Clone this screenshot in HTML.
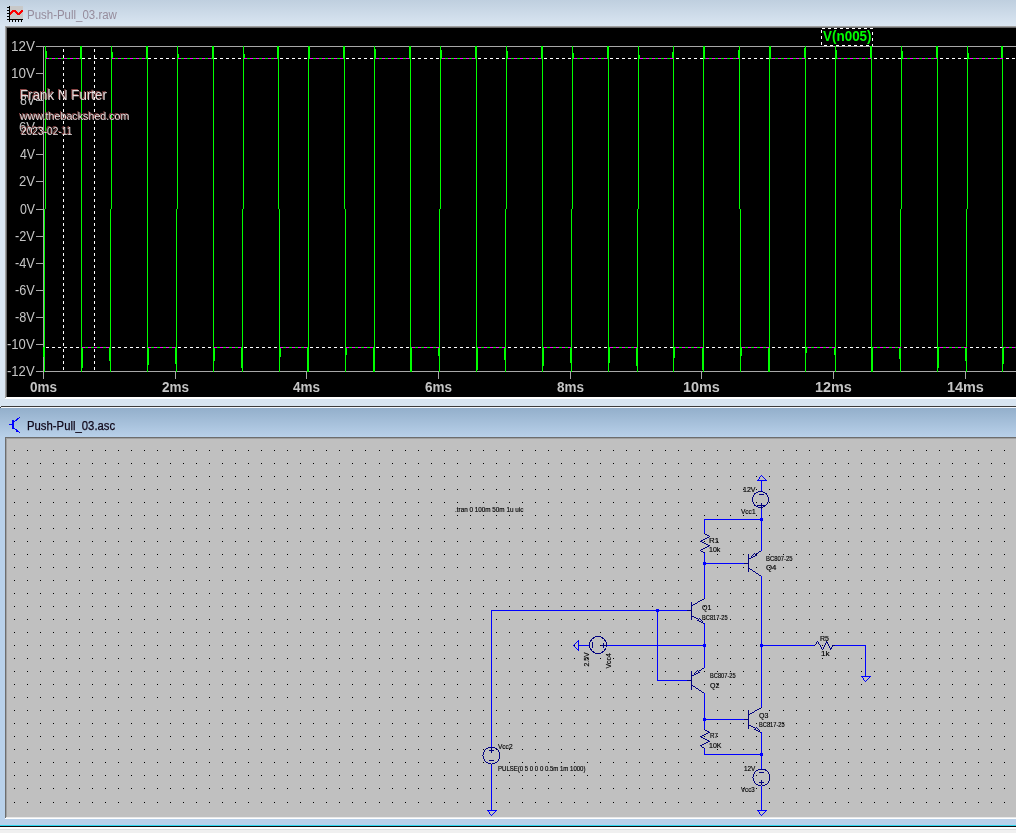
<!DOCTYPE html>
<html><head><meta charset="utf-8"><style>
html,body{margin:0;padding:0;background:#d9e5f1;overflow:hidden;width:1016px;height:833px}
svg{position:absolute;left:0;top:0;display:block}
text{font-family:"Liberation Sans",sans-serif}
</style></head><body>
<svg width="1016" height="833" viewBox="0 0 1016 833" shape-rendering="crispEdges">
<defs>
<linearGradient id="tb1" x1="0" y1="0" x2="0" y2="1"><stop offset="0" stop-color="#bfcfdf"/><stop offset="1" stop-color="#dae6f2"/></linearGradient>
<linearGradient id="tb2" x1="0" y1="0" x2="0" y2="1"><stop offset="0" stop-color="#93afcb"/><stop offset="1" stop-color="#b8d0e9"/></linearGradient>
</defs>
<rect x="0" y="0" width="1016" height="833" fill="#d9e5f1"/>
<rect x="0" y="0" width="1016" height="26" fill="url(#tb1)"/>
<rect x="0" y="26" width="5" height="371" fill="#dae6f2"/>
<rect x="5" y="26" width="1011" height="1" fill="#a0a0a0"/>
<rect x="6" y="27" width="1010" height="1" fill="#696969"/>
<rect x="5" y="26" width="1" height="373" fill="#a0a0a0"/>
<rect x="6" y="27" width="1" height="371" fill="#696969"/>
<rect x="7" y="28" width="1009" height="369" fill="#000000"/>
<rect x="6" y="397" width="1010" height="1" fill="#ffffff"/>
<rect x="5" y="398" width="1011" height="1" fill="#ffffff"/>
<rect x="0" y="399" width="1016" height="7" fill="#d8e5f1"/>
<rect x="10" y="6" width="13" height="13" fill="#c8c8c8"/>
<rect x="9" y="6" width="1" height="16" fill="#000000"/>
<rect x="7" y="19" width="16" height="1" fill="#000000"/>
<rect x="7" y="7" width="2" height="1" fill="#000000"/>
<rect x="7" y="10" width="2" height="1" fill="#000000"/>
<rect x="7" y="13" width="2" height="1" fill="#000000"/>
<rect x="7" y="16" width="2" height="1" fill="#000000"/>
<rect x="12" y="20" width="1" height="2" fill="#000000"/>
<rect x="15" y="20" width="1" height="2" fill="#000000"/>
<rect x="18" y="20" width="1" height="2" fill="#000000"/>
<rect x="21" y="20" width="1" height="2" fill="#000000"/>
<path d="M10 14.5 L13 11 L15.5 11 L17.5 13.5 L19.5 13.5 L22.5 10" fill="none" stroke="#ff0000" stroke-width="2" shape-rendering="crispEdges"/>
<text x="27" y="19" font-size="12.5" font-weight="normal" fill="#968c9c" textLength="89.89" lengthAdjust="spacingAndGlyphs">Push-Pull_03.raw</text>
<rect x="43" y="46" width="973" height="1" fill="#a8a8a8"/>
<rect x="43" y="371" width="973" height="1" fill="#a8a8a8"/>
<rect x="43" y="46" width="1" height="333" fill="#a8a8a8"/>
<rect x="36" y="46" width="8" height="1" fill="#a8a8a8"/>
<text x="11" y="51" font-size="14" font-weight="normal" fill="#c4c4c4" textLength="23.88" lengthAdjust="spacingAndGlyphs">12V</text>
<rect x="36" y="73" width="8" height="1" fill="#a8a8a8"/>
<text x="11" y="78" font-size="14" font-weight="normal" fill="#c4c4c4" textLength="23.88" lengthAdjust="spacingAndGlyphs">10V</text>
<rect x="36" y="100" width="8" height="1" fill="#a8a8a8"/>
<text x="20" y="105" font-size="14" font-weight="normal" fill="#c4c4c4" textLength="15.11" lengthAdjust="spacingAndGlyphs">8V</text>
<rect x="36" y="127" width="8" height="1" fill="#a8a8a8"/>
<text x="19" y="132" font-size="14" font-weight="normal" fill="#c4c4c4" textLength="16.05" lengthAdjust="spacingAndGlyphs">6V</text>
<rect x="36" y="154" width="8" height="1" fill="#a8a8a8"/>
<text x="20" y="159" font-size="14" font-weight="normal" fill="#c4c4c4" textLength="15.11" lengthAdjust="spacingAndGlyphs">4V</text>
<rect x="36" y="181" width="8" height="1" fill="#a8a8a8"/>
<text x="19" y="186" font-size="14" font-weight="normal" fill="#c4c4c4" textLength="16.05" lengthAdjust="spacingAndGlyphs">2V</text>
<rect x="36" y="209" width="8" height="1" fill="#a8a8a8"/>
<text x="20" y="214" font-size="14" font-weight="normal" fill="#c4c4c4" textLength="15.11" lengthAdjust="spacingAndGlyphs">0V</text>
<rect x="36" y="236" width="8" height="1" fill="#a8a8a8"/>
<text x="15" y="241" font-size="14" font-weight="normal" fill="#c4c4c4" textLength="19.82" lengthAdjust="spacingAndGlyphs">-2V</text>
<rect x="36" y="263" width="8" height="1" fill="#a8a8a8"/>
<text x="15" y="268" font-size="14" font-weight="normal" fill="#c4c4c4" textLength="19.82" lengthAdjust="spacingAndGlyphs">-4V</text>
<rect x="36" y="290" width="8" height="1" fill="#a8a8a8"/>
<text x="15" y="295" font-size="14" font-weight="normal" fill="#c4c4c4" textLength="19.82" lengthAdjust="spacingAndGlyphs">-6V</text>
<rect x="36" y="317" width="8" height="1" fill="#a8a8a8"/>
<text x="15" y="322" font-size="14" font-weight="normal" fill="#c4c4c4" textLength="19.82" lengthAdjust="spacingAndGlyphs">-8V</text>
<rect x="36" y="344" width="8" height="1" fill="#a8a8a8"/>
<text x="7" y="349" font-size="14" font-weight="normal" fill="#c4c4c4" textLength="27.61" lengthAdjust="spacingAndGlyphs">-10V</text>
<rect x="36" y="371" width="8" height="1" fill="#a8a8a8"/>
<text x="7" y="376" font-size="14" font-weight="normal" fill="#c4c4c4" textLength="27.61" lengthAdjust="spacingAndGlyphs">-12V</text>
<rect x="43" y="371" width="1" height="8" fill="#a8a8a8"/>
<text x="30" y="392" font-size="14" font-weight="bold" fill="#c4c4c4" textLength="27.03" lengthAdjust="spacingAndGlyphs">0ms</text>
<rect x="175" y="371" width="1" height="8" fill="#a8a8a8"/>
<text x="162" y="392" font-size="14" font-weight="bold" fill="#c4c4c4" textLength="27.03" lengthAdjust="spacingAndGlyphs">2ms</text>
<rect x="306" y="371" width="1" height="8" fill="#a8a8a8"/>
<text x="293" y="392" font-size="14" font-weight="bold" fill="#c4c4c4" textLength="27.03" lengthAdjust="spacingAndGlyphs">4ms</text>
<rect x="438" y="371" width="1" height="8" fill="#a8a8a8"/>
<text x="425" y="392" font-size="14" font-weight="bold" fill="#c4c4c4" textLength="27.03" lengthAdjust="spacingAndGlyphs">6ms</text>
<rect x="570" y="371" width="1" height="8" fill="#a8a8a8"/>
<text x="557" y="392" font-size="14" font-weight="bold" fill="#c4c4c4" textLength="27.03" lengthAdjust="spacingAndGlyphs">8ms</text>
<rect x="701" y="371" width="1" height="8" fill="#a8a8a8"/>
<text x="683" y="392" font-size="14" font-weight="bold" fill="#c4c4c4" textLength="36.87" lengthAdjust="spacingAndGlyphs">10ms</text>
<rect x="833" y="371" width="1" height="8" fill="#a8a8a8"/>
<text x="815" y="392" font-size="14" font-weight="bold" fill="#c4c4c4" textLength="36.87" lengthAdjust="spacingAndGlyphs">12ms</text>
<rect x="965" y="371" width="1" height="8" fill="#a8a8a8"/>
<text x="947" y="392" font-size="14" font-weight="bold" fill="#c4c4c4" textLength="36.87" lengthAdjust="spacingAndGlyphs">14ms</text>
<rect x="45" y="46" width="1" height="163" fill="#00ff00"/>
<rect x="44" y="209" width="1" height="163" fill="#00ff00"/>
<rect x="46" y="51" width="1" height="8" fill="#00ff00"/>
<rect x="43" y="347" width="1" height="10" fill="#00ff00"/>
<rect x="46" y="58" width="35" height="1" fill="#00ff00"/>
<rect x="81" y="46" width="1" height="163" fill="#00ff00"/>
<rect x="81" y="209" width="1" height="163" fill="#00ff00"/>
<rect x="80" y="46" width="1" height="13" fill="#00ff00"/>
<rect x="82" y="347" width="1" height="21" fill="#00ff00"/>
<rect x="82" y="347" width="28" height="1" fill="#00ff00"/>
<rect x="111" y="46" width="1" height="163" fill="#00ff00"/>
<rect x="110" y="209" width="1" height="163" fill="#00ff00"/>
<rect x="112" y="52" width="1" height="7" fill="#00ff00"/>
<rect x="109" y="347" width="1" height="14" fill="#00ff00"/>
<rect x="112" y="58" width="35" height="1" fill="#00ff00"/>
<rect x="147" y="46" width="1" height="163" fill="#00ff00"/>
<rect x="147" y="209" width="1" height="163" fill="#00ff00"/>
<rect x="146" y="46" width="1" height="13" fill="#00ff00"/>
<rect x="148" y="347" width="1" height="18" fill="#00ff00"/>
<rect x="148" y="347" width="28" height="1" fill="#00ff00"/>
<rect x="177" y="46" width="1" height="163" fill="#00ff00"/>
<rect x="176" y="209" width="1" height="163" fill="#00ff00"/>
<rect x="178" y="54" width="1" height="5" fill="#00ff00"/>
<rect x="175" y="347" width="1" height="17" fill="#00ff00"/>
<rect x="178" y="58" width="35" height="1" fill="#00ff00"/>
<rect x="213" y="46" width="1" height="163" fill="#00ff00"/>
<rect x="213" y="209" width="1" height="163" fill="#00ff00"/>
<rect x="212" y="46" width="1" height="13" fill="#00ff00"/>
<rect x="214" y="347" width="1" height="14" fill="#00ff00"/>
<rect x="214" y="347" width="28" height="1" fill="#00ff00"/>
<rect x="243" y="46" width="1" height="163" fill="#00ff00"/>
<rect x="242" y="209" width="1" height="163" fill="#00ff00"/>
<rect x="244" y="54" width="1" height="5" fill="#00ff00"/>
<rect x="241" y="347" width="1" height="21" fill="#00ff00"/>
<rect x="244" y="58" width="34" height="1" fill="#00ff00"/>
<rect x="278" y="46" width="1" height="163" fill="#00ff00"/>
<rect x="279" y="209" width="1" height="163" fill="#00ff00"/>
<rect x="277" y="46" width="1" height="13" fill="#00ff00"/>
<rect x="280" y="347" width="1" height="10" fill="#00ff00"/>
<rect x="280" y="347" width="28" height="1" fill="#00ff00"/>
<rect x="308" y="46" width="1" height="163" fill="#00ff00"/>
<rect x="308" y="209" width="1" height="163" fill="#00ff00"/>
<rect x="309" y="46" width="1" height="13" fill="#00ff00"/>
<rect x="307" y="347" width="1" height="25" fill="#00ff00"/>
<rect x="309" y="58" width="35" height="1" fill="#00ff00"/>
<rect x="344" y="46" width="1" height="163" fill="#00ff00"/>
<rect x="345" y="209" width="1" height="163" fill="#00ff00"/>
<rect x="343" y="46" width="1" height="13" fill="#00ff00"/>
<rect x="346" y="347" width="1" height="8" fill="#00ff00"/>
<rect x="346" y="347" width="28" height="1" fill="#00ff00"/>
<rect x="374" y="46" width="1" height="163" fill="#00ff00"/>
<rect x="374" y="209" width="1" height="163" fill="#00ff00"/>
<rect x="375" y="49" width="1" height="10" fill="#00ff00"/>
<rect x="373" y="347" width="1" height="25" fill="#00ff00"/>
<rect x="375" y="58" width="35" height="1" fill="#00ff00"/>
<rect x="410" y="46" width="1" height="163" fill="#00ff00"/>
<rect x="410" y="209" width="1" height="163" fill="#00ff00"/>
<rect x="409" y="46" width="1" height="13" fill="#00ff00"/>
<rect x="411" y="347" width="1" height="25" fill="#00ff00"/>
<rect x="411" y="347" width="28" height="1" fill="#00ff00"/>
<rect x="440" y="46" width="1" height="163" fill="#00ff00"/>
<rect x="439" y="209" width="1" height="163" fill="#00ff00"/>
<rect x="441" y="50" width="1" height="9" fill="#00ff00"/>
<rect x="438" y="347" width="1" height="9" fill="#00ff00"/>
<rect x="441" y="58" width="35" height="1" fill="#00ff00"/>
<rect x="476" y="46" width="1" height="163" fill="#00ff00"/>
<rect x="476" y="209" width="1" height="163" fill="#00ff00"/>
<rect x="475" y="46" width="1" height="13" fill="#00ff00"/>
<rect x="477" y="347" width="1" height="23" fill="#00ff00"/>
<rect x="477" y="347" width="28" height="1" fill="#00ff00"/>
<rect x="506" y="46" width="1" height="163" fill="#00ff00"/>
<rect x="505" y="209" width="1" height="163" fill="#00ff00"/>
<rect x="507" y="51" width="1" height="8" fill="#00ff00"/>
<rect x="504" y="347" width="1" height="13" fill="#00ff00"/>
<rect x="507" y="58" width="35" height="1" fill="#00ff00"/>
<rect x="542" y="46" width="1" height="163" fill="#00ff00"/>
<rect x="542" y="209" width="1" height="163" fill="#00ff00"/>
<rect x="541" y="46" width="1" height="13" fill="#00ff00"/>
<rect x="543" y="347" width="1" height="19" fill="#00ff00"/>
<rect x="543" y="347" width="28" height="1" fill="#00ff00"/>
<rect x="572" y="46" width="1" height="163" fill="#00ff00"/>
<rect x="571" y="209" width="1" height="163" fill="#00ff00"/>
<rect x="573" y="53" width="1" height="6" fill="#00ff00"/>
<rect x="570" y="347" width="1" height="16" fill="#00ff00"/>
<rect x="573" y="58" width="35" height="1" fill="#00ff00"/>
<rect x="608" y="46" width="1" height="163" fill="#00ff00"/>
<rect x="608" y="209" width="1" height="163" fill="#00ff00"/>
<rect x="607" y="46" width="1" height="13" fill="#00ff00"/>
<rect x="609" y="347" width="1" height="16" fill="#00ff00"/>
<rect x="609" y="347" width="28" height="1" fill="#00ff00"/>
<rect x="638" y="46" width="1" height="163" fill="#00ff00"/>
<rect x="637" y="209" width="1" height="163" fill="#00ff00"/>
<rect x="639" y="55" width="1" height="4" fill="#00ff00"/>
<rect x="636" y="347" width="1" height="19" fill="#00ff00"/>
<rect x="639" y="58" width="34" height="1" fill="#00ff00"/>
<rect x="673" y="46" width="1" height="163" fill="#00ff00"/>
<rect x="673" y="209" width="1" height="163" fill="#00ff00"/>
<rect x="672" y="52" width="1" height="7" fill="#00ff00"/>
<rect x="674" y="347" width="1" height="11" fill="#00ff00"/>
<rect x="674" y="347" width="29" height="1" fill="#00ff00"/>
<rect x="703" y="46" width="1" height="163" fill="#00ff00"/>
<rect x="703" y="209" width="1" height="163" fill="#00ff00"/>
<rect x="704" y="46" width="1" height="13" fill="#00ff00"/>
<rect x="702" y="347" width="1" height="23" fill="#00ff00"/>
<rect x="704" y="58" width="35" height="1" fill="#00ff00"/>
<rect x="739" y="46" width="1" height="163" fill="#00ff00"/>
<rect x="740" y="209" width="1" height="163" fill="#00ff00"/>
<rect x="738" y="50" width="1" height="9" fill="#00ff00"/>
<rect x="741" y="347" width="1" height="9" fill="#00ff00"/>
<rect x="741" y="347" width="28" height="1" fill="#00ff00"/>
<rect x="769" y="46" width="1" height="163" fill="#00ff00"/>
<rect x="769" y="209" width="1" height="163" fill="#00ff00"/>
<rect x="770" y="46" width="1" height="13" fill="#00ff00"/>
<rect x="768" y="347" width="1" height="25" fill="#00ff00"/>
<rect x="770" y="58" width="35" height="1" fill="#00ff00"/>
<rect x="805" y="46" width="1" height="163" fill="#00ff00"/>
<rect x="805" y="209" width="1" height="163" fill="#00ff00"/>
<rect x="804" y="48" width="1" height="11" fill="#00ff00"/>
<rect x="806" y="347" width="1" height="6" fill="#00ff00"/>
<rect x="806" y="347" width="29" height="1" fill="#00ff00"/>
<rect x="835" y="46" width="1" height="163" fill="#00ff00"/>
<rect x="835" y="209" width="1" height="163" fill="#00ff00"/>
<rect x="836" y="50" width="1" height="9" fill="#00ff00"/>
<rect x="834" y="347" width="1" height="8" fill="#00ff00"/>
<rect x="836" y="58" width="35" height="1" fill="#00ff00"/>
<rect x="871" y="46" width="1" height="163" fill="#00ff00"/>
<rect x="871" y="209" width="1" height="163" fill="#00ff00"/>
<rect x="870" y="46" width="1" height="13" fill="#00ff00"/>
<rect x="872" y="347" width="1" height="25" fill="#00ff00"/>
<rect x="872" y="347" width="28" height="1" fill="#00ff00"/>
<rect x="901" y="46" width="1" height="163" fill="#00ff00"/>
<rect x="900" y="209" width="1" height="163" fill="#00ff00"/>
<rect x="902" y="51" width="1" height="8" fill="#00ff00"/>
<rect x="899" y="347" width="1" height="12" fill="#00ff00"/>
<rect x="902" y="58" width="35" height="1" fill="#00ff00"/>
<rect x="937" y="46" width="1" height="163" fill="#00ff00"/>
<rect x="937" y="209" width="1" height="163" fill="#00ff00"/>
<rect x="936" y="46" width="1" height="13" fill="#00ff00"/>
<rect x="938" y="347" width="1" height="21" fill="#00ff00"/>
<rect x="938" y="347" width="28" height="1" fill="#00ff00"/>
<rect x="967" y="46" width="1" height="163" fill="#00ff00"/>
<rect x="966" y="209" width="1" height="163" fill="#00ff00"/>
<rect x="968" y="53" width="1" height="6" fill="#00ff00"/>
<rect x="965" y="347" width="1" height="14" fill="#00ff00"/>
<rect x="968" y="58" width="34" height="1" fill="#00ff00"/>
<rect x="1002" y="46" width="1" height="163" fill="#00ff00"/>
<rect x="1002" y="209" width="1" height="163" fill="#00ff00"/>
<rect x="1001" y="46" width="1" height="13" fill="#00ff00"/>
<rect x="1003" y="347" width="1" height="17" fill="#00ff00"/>
<rect x="1003" y="347" width="13" height="1" fill="#00ff00"/>
<g style="mix-blend-mode:difference">
<path d="M46 58h1v1h-1zM46 347h1v1h-1zM47 58h1v1h-1zM47 347h1v1h-1zM48 58h1v1h-1zM48 347h1v1h-1zM52 58h1v1h-1zM52 347h1v1h-1zM53 58h1v1h-1zM53 347h1v1h-1zM54 58h1v1h-1zM54 347h1v1h-1zM58 58h1v1h-1zM58 347h1v1h-1zM59 58h1v1h-1zM59 347h1v1h-1zM60 58h1v1h-1zM60 347h1v1h-1zM64 58h1v1h-1zM64 347h1v1h-1zM65 58h1v1h-1zM65 347h1v1h-1zM66 58h1v1h-1zM66 347h1v1h-1zM70 58h1v1h-1zM70 347h1v1h-1zM71 58h1v1h-1zM71 347h1v1h-1zM72 58h1v1h-1zM72 347h1v1h-1zM76 58h1v1h-1zM76 347h1v1h-1zM77 58h1v1h-1zM77 347h1v1h-1zM78 58h1v1h-1zM78 347h1v1h-1zM82 58h1v1h-1zM82 347h1v1h-1zM83 58h1v1h-1zM83 347h1v1h-1zM84 58h1v1h-1zM84 347h1v1h-1zM88 58h1v1h-1zM88 347h1v1h-1zM89 58h1v1h-1zM89 347h1v1h-1zM90 58h1v1h-1zM90 347h1v1h-1zM94 58h1v1h-1zM94 347h1v1h-1zM95 58h1v1h-1zM95 347h1v1h-1zM96 58h1v1h-1zM96 347h1v1h-1zM100 58h1v1h-1zM100 347h1v1h-1zM101 58h1v1h-1zM101 347h1v1h-1zM102 58h1v1h-1zM102 347h1v1h-1zM106 58h1v1h-1zM106 347h1v1h-1zM107 58h1v1h-1zM107 347h1v1h-1zM108 58h1v1h-1zM108 347h1v1h-1zM112 58h1v1h-1zM112 347h1v1h-1zM113 58h1v1h-1zM113 347h1v1h-1zM114 58h1v1h-1zM114 347h1v1h-1zM118 58h1v1h-1zM118 347h1v1h-1zM119 58h1v1h-1zM119 347h1v1h-1zM120 58h1v1h-1zM120 347h1v1h-1zM124 58h1v1h-1zM124 347h1v1h-1zM125 58h1v1h-1zM125 347h1v1h-1zM126 58h1v1h-1zM126 347h1v1h-1zM130 58h1v1h-1zM130 347h1v1h-1zM131 58h1v1h-1zM131 347h1v1h-1zM132 58h1v1h-1zM132 347h1v1h-1zM136 58h1v1h-1zM136 347h1v1h-1zM137 58h1v1h-1zM137 347h1v1h-1zM138 58h1v1h-1zM138 347h1v1h-1zM142 58h1v1h-1zM142 347h1v1h-1zM143 58h1v1h-1zM143 347h1v1h-1zM144 58h1v1h-1zM144 347h1v1h-1zM148 58h1v1h-1zM148 347h1v1h-1zM149 58h1v1h-1zM149 347h1v1h-1zM150 58h1v1h-1zM150 347h1v1h-1zM154 58h1v1h-1zM154 347h1v1h-1zM155 58h1v1h-1zM155 347h1v1h-1zM156 58h1v1h-1zM156 347h1v1h-1zM160 58h1v1h-1zM160 347h1v1h-1zM161 58h1v1h-1zM161 347h1v1h-1zM162 58h1v1h-1zM162 347h1v1h-1zM166 58h1v1h-1zM166 347h1v1h-1zM167 58h1v1h-1zM167 347h1v1h-1zM168 58h1v1h-1zM168 347h1v1h-1zM172 58h1v1h-1zM172 347h1v1h-1zM173 58h1v1h-1zM173 347h1v1h-1zM174 58h1v1h-1zM174 347h1v1h-1zM178 58h1v1h-1zM178 347h1v1h-1zM179 58h1v1h-1zM179 347h1v1h-1zM180 58h1v1h-1zM180 347h1v1h-1zM184 58h1v1h-1zM184 347h1v1h-1zM185 58h1v1h-1zM185 347h1v1h-1zM186 58h1v1h-1zM186 347h1v1h-1zM190 58h1v1h-1zM190 347h1v1h-1zM191 58h1v1h-1zM191 347h1v1h-1zM192 58h1v1h-1zM192 347h1v1h-1zM196 58h1v1h-1zM196 347h1v1h-1zM197 58h1v1h-1zM197 347h1v1h-1zM198 58h1v1h-1zM198 347h1v1h-1zM202 58h1v1h-1zM202 347h1v1h-1zM203 58h1v1h-1zM203 347h1v1h-1zM204 58h1v1h-1zM204 347h1v1h-1zM208 58h1v1h-1zM208 347h1v1h-1zM209 58h1v1h-1zM209 347h1v1h-1zM210 58h1v1h-1zM210 347h1v1h-1zM214 58h1v1h-1zM214 347h1v1h-1zM215 58h1v1h-1zM215 347h1v1h-1zM216 58h1v1h-1zM216 347h1v1h-1zM220 58h1v1h-1zM220 347h1v1h-1zM221 58h1v1h-1zM221 347h1v1h-1zM222 58h1v1h-1zM222 347h1v1h-1zM226 58h1v1h-1zM226 347h1v1h-1zM227 58h1v1h-1zM227 347h1v1h-1zM228 58h1v1h-1zM228 347h1v1h-1zM232 58h1v1h-1zM232 347h1v1h-1zM233 58h1v1h-1zM233 347h1v1h-1zM234 58h1v1h-1zM234 347h1v1h-1zM238 58h1v1h-1zM238 347h1v1h-1zM239 58h1v1h-1zM239 347h1v1h-1zM240 58h1v1h-1zM240 347h1v1h-1zM244 58h1v1h-1zM244 347h1v1h-1zM245 58h1v1h-1zM245 347h1v1h-1zM246 58h1v1h-1zM246 347h1v1h-1zM250 58h1v1h-1zM250 347h1v1h-1zM251 58h1v1h-1zM251 347h1v1h-1zM252 58h1v1h-1zM252 347h1v1h-1zM256 58h1v1h-1zM256 347h1v1h-1zM257 58h1v1h-1zM257 347h1v1h-1zM258 58h1v1h-1zM258 347h1v1h-1zM262 58h1v1h-1zM262 347h1v1h-1zM263 58h1v1h-1zM263 347h1v1h-1zM264 58h1v1h-1zM264 347h1v1h-1zM268 58h1v1h-1zM268 347h1v1h-1zM269 58h1v1h-1zM269 347h1v1h-1zM270 58h1v1h-1zM270 347h1v1h-1zM274 58h1v1h-1zM274 347h1v1h-1zM275 58h1v1h-1zM275 347h1v1h-1zM276 58h1v1h-1zM276 347h1v1h-1zM280 58h1v1h-1zM280 347h1v1h-1zM281 58h1v1h-1zM281 347h1v1h-1zM282 58h1v1h-1zM282 347h1v1h-1zM286 58h1v1h-1zM286 347h1v1h-1zM287 58h1v1h-1zM287 347h1v1h-1zM288 58h1v1h-1zM288 347h1v1h-1zM292 58h1v1h-1zM292 347h1v1h-1zM293 58h1v1h-1zM293 347h1v1h-1zM294 58h1v1h-1zM294 347h1v1h-1zM298 58h1v1h-1zM298 347h1v1h-1zM299 58h1v1h-1zM299 347h1v1h-1zM300 58h1v1h-1zM300 347h1v1h-1zM304 58h1v1h-1zM304 347h1v1h-1zM305 58h1v1h-1zM305 347h1v1h-1zM306 58h1v1h-1zM306 347h1v1h-1zM310 58h1v1h-1zM310 347h1v1h-1zM311 58h1v1h-1zM311 347h1v1h-1zM312 58h1v1h-1zM312 347h1v1h-1zM316 58h1v1h-1zM316 347h1v1h-1zM317 58h1v1h-1zM317 347h1v1h-1zM318 58h1v1h-1zM318 347h1v1h-1zM322 58h1v1h-1zM322 347h1v1h-1zM323 58h1v1h-1zM323 347h1v1h-1zM324 58h1v1h-1zM324 347h1v1h-1zM328 58h1v1h-1zM328 347h1v1h-1zM329 58h1v1h-1zM329 347h1v1h-1zM330 58h1v1h-1zM330 347h1v1h-1zM334 58h1v1h-1zM334 347h1v1h-1zM335 58h1v1h-1zM335 347h1v1h-1zM336 58h1v1h-1zM336 347h1v1h-1zM340 58h1v1h-1zM340 347h1v1h-1zM341 58h1v1h-1zM341 347h1v1h-1zM342 58h1v1h-1zM342 347h1v1h-1zM346 58h1v1h-1zM346 347h1v1h-1zM347 58h1v1h-1zM347 347h1v1h-1zM348 58h1v1h-1zM348 347h1v1h-1zM352 58h1v1h-1zM352 347h1v1h-1zM353 58h1v1h-1zM353 347h1v1h-1zM354 58h1v1h-1zM354 347h1v1h-1zM358 58h1v1h-1zM358 347h1v1h-1zM359 58h1v1h-1zM359 347h1v1h-1zM360 58h1v1h-1zM360 347h1v1h-1zM364 58h1v1h-1zM364 347h1v1h-1zM365 58h1v1h-1zM365 347h1v1h-1zM366 58h1v1h-1zM366 347h1v1h-1zM370 58h1v1h-1zM370 347h1v1h-1zM371 58h1v1h-1zM371 347h1v1h-1zM372 58h1v1h-1zM372 347h1v1h-1zM376 58h1v1h-1zM376 347h1v1h-1zM377 58h1v1h-1zM377 347h1v1h-1zM378 58h1v1h-1zM378 347h1v1h-1zM382 58h1v1h-1zM382 347h1v1h-1zM383 58h1v1h-1zM383 347h1v1h-1zM384 58h1v1h-1zM384 347h1v1h-1zM388 58h1v1h-1zM388 347h1v1h-1zM389 58h1v1h-1zM389 347h1v1h-1zM390 58h1v1h-1zM390 347h1v1h-1zM394 58h1v1h-1zM394 347h1v1h-1zM395 58h1v1h-1zM395 347h1v1h-1zM396 58h1v1h-1zM396 347h1v1h-1zM400 58h1v1h-1zM400 347h1v1h-1zM401 58h1v1h-1zM401 347h1v1h-1zM402 58h1v1h-1zM402 347h1v1h-1zM406 58h1v1h-1zM406 347h1v1h-1zM407 58h1v1h-1zM407 347h1v1h-1zM408 58h1v1h-1zM408 347h1v1h-1zM412 58h1v1h-1zM412 347h1v1h-1zM413 58h1v1h-1zM413 347h1v1h-1zM414 58h1v1h-1zM414 347h1v1h-1zM418 58h1v1h-1zM418 347h1v1h-1zM419 58h1v1h-1zM419 347h1v1h-1zM420 58h1v1h-1zM420 347h1v1h-1zM424 58h1v1h-1zM424 347h1v1h-1zM425 58h1v1h-1zM425 347h1v1h-1zM426 58h1v1h-1zM426 347h1v1h-1zM430 58h1v1h-1zM430 347h1v1h-1zM431 58h1v1h-1zM431 347h1v1h-1zM432 58h1v1h-1zM432 347h1v1h-1zM436 58h1v1h-1zM436 347h1v1h-1zM437 58h1v1h-1zM437 347h1v1h-1zM438 58h1v1h-1zM438 347h1v1h-1zM442 58h1v1h-1zM442 347h1v1h-1zM443 58h1v1h-1zM443 347h1v1h-1zM444 58h1v1h-1zM444 347h1v1h-1zM448 58h1v1h-1zM448 347h1v1h-1zM449 58h1v1h-1zM449 347h1v1h-1zM450 58h1v1h-1zM450 347h1v1h-1zM454 58h1v1h-1zM454 347h1v1h-1zM455 58h1v1h-1zM455 347h1v1h-1zM456 58h1v1h-1zM456 347h1v1h-1zM460 58h1v1h-1zM460 347h1v1h-1zM461 58h1v1h-1zM461 347h1v1h-1zM462 58h1v1h-1zM462 347h1v1h-1zM466 58h1v1h-1zM466 347h1v1h-1zM467 58h1v1h-1zM467 347h1v1h-1zM468 58h1v1h-1zM468 347h1v1h-1zM472 58h1v1h-1zM472 347h1v1h-1zM473 58h1v1h-1zM473 347h1v1h-1zM474 58h1v1h-1zM474 347h1v1h-1zM478 58h1v1h-1zM478 347h1v1h-1zM479 58h1v1h-1zM479 347h1v1h-1zM480 58h1v1h-1zM480 347h1v1h-1zM484 58h1v1h-1zM484 347h1v1h-1zM485 58h1v1h-1zM485 347h1v1h-1zM486 58h1v1h-1zM486 347h1v1h-1zM490 58h1v1h-1zM490 347h1v1h-1zM491 58h1v1h-1zM491 347h1v1h-1zM492 58h1v1h-1zM492 347h1v1h-1zM496 58h1v1h-1zM496 347h1v1h-1zM497 58h1v1h-1zM497 347h1v1h-1zM498 58h1v1h-1zM498 347h1v1h-1zM502 58h1v1h-1zM502 347h1v1h-1zM503 58h1v1h-1zM503 347h1v1h-1zM504 58h1v1h-1zM504 347h1v1h-1zM508 58h1v1h-1zM508 347h1v1h-1zM509 58h1v1h-1zM509 347h1v1h-1zM510 58h1v1h-1zM510 347h1v1h-1zM514 58h1v1h-1zM514 347h1v1h-1zM515 58h1v1h-1zM515 347h1v1h-1zM516 58h1v1h-1zM516 347h1v1h-1zM520 58h1v1h-1zM520 347h1v1h-1zM521 58h1v1h-1zM521 347h1v1h-1zM522 58h1v1h-1zM522 347h1v1h-1zM526 58h1v1h-1zM526 347h1v1h-1zM527 58h1v1h-1zM527 347h1v1h-1zM528 58h1v1h-1zM528 347h1v1h-1zM532 58h1v1h-1zM532 347h1v1h-1zM533 58h1v1h-1zM533 347h1v1h-1zM534 58h1v1h-1zM534 347h1v1h-1zM538 58h1v1h-1zM538 347h1v1h-1zM539 58h1v1h-1zM539 347h1v1h-1zM540 58h1v1h-1zM540 347h1v1h-1zM544 58h1v1h-1zM544 347h1v1h-1zM545 58h1v1h-1zM545 347h1v1h-1zM546 58h1v1h-1zM546 347h1v1h-1zM550 58h1v1h-1zM550 347h1v1h-1zM551 58h1v1h-1zM551 347h1v1h-1zM552 58h1v1h-1zM552 347h1v1h-1zM556 58h1v1h-1zM556 347h1v1h-1zM557 58h1v1h-1zM557 347h1v1h-1zM558 58h1v1h-1zM558 347h1v1h-1zM562 58h1v1h-1zM562 347h1v1h-1zM563 58h1v1h-1zM563 347h1v1h-1zM564 58h1v1h-1zM564 347h1v1h-1zM568 58h1v1h-1zM568 347h1v1h-1zM569 58h1v1h-1zM569 347h1v1h-1zM570 58h1v1h-1zM570 347h1v1h-1zM574 58h1v1h-1zM574 347h1v1h-1zM575 58h1v1h-1zM575 347h1v1h-1zM576 58h1v1h-1zM576 347h1v1h-1zM580 58h1v1h-1zM580 347h1v1h-1zM581 58h1v1h-1zM581 347h1v1h-1zM582 58h1v1h-1zM582 347h1v1h-1zM586 58h1v1h-1zM586 347h1v1h-1zM587 58h1v1h-1zM587 347h1v1h-1zM588 58h1v1h-1zM588 347h1v1h-1zM592 58h1v1h-1zM592 347h1v1h-1zM593 58h1v1h-1zM593 347h1v1h-1zM594 58h1v1h-1zM594 347h1v1h-1zM598 58h1v1h-1zM598 347h1v1h-1zM599 58h1v1h-1zM599 347h1v1h-1zM600 58h1v1h-1zM600 347h1v1h-1zM604 58h1v1h-1zM604 347h1v1h-1zM605 58h1v1h-1zM605 347h1v1h-1zM606 58h1v1h-1zM606 347h1v1h-1zM610 58h1v1h-1zM610 347h1v1h-1zM611 58h1v1h-1zM611 347h1v1h-1zM612 58h1v1h-1zM612 347h1v1h-1zM616 58h1v1h-1zM616 347h1v1h-1zM617 58h1v1h-1zM617 347h1v1h-1zM618 58h1v1h-1zM618 347h1v1h-1zM622 58h1v1h-1zM622 347h1v1h-1zM623 58h1v1h-1zM623 347h1v1h-1zM624 58h1v1h-1zM624 347h1v1h-1zM628 58h1v1h-1zM628 347h1v1h-1zM629 58h1v1h-1zM629 347h1v1h-1zM630 58h1v1h-1zM630 347h1v1h-1zM634 58h1v1h-1zM634 347h1v1h-1zM635 58h1v1h-1zM635 347h1v1h-1zM636 58h1v1h-1zM636 347h1v1h-1zM640 58h1v1h-1zM640 347h1v1h-1zM641 58h1v1h-1zM641 347h1v1h-1zM642 58h1v1h-1zM642 347h1v1h-1zM646 58h1v1h-1zM646 347h1v1h-1zM647 58h1v1h-1zM647 347h1v1h-1zM648 58h1v1h-1zM648 347h1v1h-1zM652 58h1v1h-1zM652 347h1v1h-1zM653 58h1v1h-1zM653 347h1v1h-1zM654 58h1v1h-1zM654 347h1v1h-1zM658 58h1v1h-1zM658 347h1v1h-1zM659 58h1v1h-1zM659 347h1v1h-1zM660 58h1v1h-1zM660 347h1v1h-1zM664 58h1v1h-1zM664 347h1v1h-1zM665 58h1v1h-1zM665 347h1v1h-1zM666 58h1v1h-1zM666 347h1v1h-1zM670 58h1v1h-1zM670 347h1v1h-1zM671 58h1v1h-1zM671 347h1v1h-1zM672 58h1v1h-1zM672 347h1v1h-1zM676 58h1v1h-1zM676 347h1v1h-1zM677 58h1v1h-1zM677 347h1v1h-1zM678 58h1v1h-1zM678 347h1v1h-1zM682 58h1v1h-1zM682 347h1v1h-1zM683 58h1v1h-1zM683 347h1v1h-1zM684 58h1v1h-1zM684 347h1v1h-1zM688 58h1v1h-1zM688 347h1v1h-1zM689 58h1v1h-1zM689 347h1v1h-1zM690 58h1v1h-1zM690 347h1v1h-1zM694 58h1v1h-1zM694 347h1v1h-1zM695 58h1v1h-1zM695 347h1v1h-1zM696 58h1v1h-1zM696 347h1v1h-1zM700 58h1v1h-1zM700 347h1v1h-1zM701 58h1v1h-1zM701 347h1v1h-1zM702 58h1v1h-1zM702 347h1v1h-1zM706 58h1v1h-1zM706 347h1v1h-1zM707 58h1v1h-1zM707 347h1v1h-1zM708 58h1v1h-1zM708 347h1v1h-1zM712 58h1v1h-1zM712 347h1v1h-1zM713 58h1v1h-1zM713 347h1v1h-1zM714 58h1v1h-1zM714 347h1v1h-1zM718 58h1v1h-1zM718 347h1v1h-1zM719 58h1v1h-1zM719 347h1v1h-1zM720 58h1v1h-1zM720 347h1v1h-1zM724 58h1v1h-1zM724 347h1v1h-1zM725 58h1v1h-1zM725 347h1v1h-1zM726 58h1v1h-1zM726 347h1v1h-1zM730 58h1v1h-1zM730 347h1v1h-1zM731 58h1v1h-1zM731 347h1v1h-1zM732 58h1v1h-1zM732 347h1v1h-1zM736 58h1v1h-1zM736 347h1v1h-1zM737 58h1v1h-1zM737 347h1v1h-1zM738 58h1v1h-1zM738 347h1v1h-1zM742 58h1v1h-1zM742 347h1v1h-1zM743 58h1v1h-1zM743 347h1v1h-1zM744 58h1v1h-1zM744 347h1v1h-1zM748 58h1v1h-1zM748 347h1v1h-1zM749 58h1v1h-1zM749 347h1v1h-1zM750 58h1v1h-1zM750 347h1v1h-1zM754 58h1v1h-1zM754 347h1v1h-1zM755 58h1v1h-1zM755 347h1v1h-1zM756 58h1v1h-1zM756 347h1v1h-1zM760 58h1v1h-1zM760 347h1v1h-1zM761 58h1v1h-1zM761 347h1v1h-1zM762 58h1v1h-1zM762 347h1v1h-1zM766 58h1v1h-1zM766 347h1v1h-1zM767 58h1v1h-1zM767 347h1v1h-1zM768 58h1v1h-1zM768 347h1v1h-1zM772 58h1v1h-1zM772 347h1v1h-1zM773 58h1v1h-1zM773 347h1v1h-1zM774 58h1v1h-1zM774 347h1v1h-1zM778 58h1v1h-1zM778 347h1v1h-1zM779 58h1v1h-1zM779 347h1v1h-1zM780 58h1v1h-1zM780 347h1v1h-1zM784 58h1v1h-1zM784 347h1v1h-1zM785 58h1v1h-1zM785 347h1v1h-1zM786 58h1v1h-1zM786 347h1v1h-1zM790 58h1v1h-1zM790 347h1v1h-1zM791 58h1v1h-1zM791 347h1v1h-1zM792 58h1v1h-1zM792 347h1v1h-1zM796 58h1v1h-1zM796 347h1v1h-1zM797 58h1v1h-1zM797 347h1v1h-1zM798 58h1v1h-1zM798 347h1v1h-1zM802 58h1v1h-1zM802 347h1v1h-1zM803 58h1v1h-1zM803 347h1v1h-1zM804 58h1v1h-1zM804 347h1v1h-1zM808 58h1v1h-1zM808 347h1v1h-1zM809 58h1v1h-1zM809 347h1v1h-1zM810 58h1v1h-1zM810 347h1v1h-1zM814 58h1v1h-1zM814 347h1v1h-1zM815 58h1v1h-1zM815 347h1v1h-1zM816 58h1v1h-1zM816 347h1v1h-1zM820 58h1v1h-1zM820 347h1v1h-1zM821 58h1v1h-1zM821 347h1v1h-1zM822 58h1v1h-1zM822 347h1v1h-1zM826 58h1v1h-1zM826 347h1v1h-1zM827 58h1v1h-1zM827 347h1v1h-1zM828 58h1v1h-1zM828 347h1v1h-1zM832 58h1v1h-1zM832 347h1v1h-1zM833 58h1v1h-1zM833 347h1v1h-1zM834 58h1v1h-1zM834 347h1v1h-1zM838 58h1v1h-1zM838 347h1v1h-1zM839 58h1v1h-1zM839 347h1v1h-1zM840 58h1v1h-1zM840 347h1v1h-1zM844 58h1v1h-1zM844 347h1v1h-1zM845 58h1v1h-1zM845 347h1v1h-1zM846 58h1v1h-1zM846 347h1v1h-1zM850 58h1v1h-1zM850 347h1v1h-1zM851 58h1v1h-1zM851 347h1v1h-1zM852 58h1v1h-1zM852 347h1v1h-1zM856 58h1v1h-1zM856 347h1v1h-1zM857 58h1v1h-1zM857 347h1v1h-1zM858 58h1v1h-1zM858 347h1v1h-1zM862 58h1v1h-1zM862 347h1v1h-1zM863 58h1v1h-1zM863 347h1v1h-1zM864 58h1v1h-1zM864 347h1v1h-1zM868 58h1v1h-1zM868 347h1v1h-1zM869 58h1v1h-1zM869 347h1v1h-1zM870 58h1v1h-1zM870 347h1v1h-1zM874 58h1v1h-1zM874 347h1v1h-1zM875 58h1v1h-1zM875 347h1v1h-1zM876 58h1v1h-1zM876 347h1v1h-1zM880 58h1v1h-1zM880 347h1v1h-1zM881 58h1v1h-1zM881 347h1v1h-1zM882 58h1v1h-1zM882 347h1v1h-1zM886 58h1v1h-1zM886 347h1v1h-1zM887 58h1v1h-1zM887 347h1v1h-1zM888 58h1v1h-1zM888 347h1v1h-1zM892 58h1v1h-1zM892 347h1v1h-1zM893 58h1v1h-1zM893 347h1v1h-1zM894 58h1v1h-1zM894 347h1v1h-1zM898 58h1v1h-1zM898 347h1v1h-1zM899 58h1v1h-1zM899 347h1v1h-1zM900 58h1v1h-1zM900 347h1v1h-1zM904 58h1v1h-1zM904 347h1v1h-1zM905 58h1v1h-1zM905 347h1v1h-1zM906 58h1v1h-1zM906 347h1v1h-1zM910 58h1v1h-1zM910 347h1v1h-1zM911 58h1v1h-1zM911 347h1v1h-1zM912 58h1v1h-1zM912 347h1v1h-1zM916 58h1v1h-1zM916 347h1v1h-1zM917 58h1v1h-1zM917 347h1v1h-1zM918 58h1v1h-1zM918 347h1v1h-1zM922 58h1v1h-1zM922 347h1v1h-1zM923 58h1v1h-1zM923 347h1v1h-1zM924 58h1v1h-1zM924 347h1v1h-1zM928 58h1v1h-1zM928 347h1v1h-1zM929 58h1v1h-1zM929 347h1v1h-1zM930 58h1v1h-1zM930 347h1v1h-1zM934 58h1v1h-1zM934 347h1v1h-1zM935 58h1v1h-1zM935 347h1v1h-1zM936 58h1v1h-1zM936 347h1v1h-1zM940 58h1v1h-1zM940 347h1v1h-1zM941 58h1v1h-1zM941 347h1v1h-1zM942 58h1v1h-1zM942 347h1v1h-1zM946 58h1v1h-1zM946 347h1v1h-1zM947 58h1v1h-1zM947 347h1v1h-1zM948 58h1v1h-1zM948 347h1v1h-1zM952 58h1v1h-1zM952 347h1v1h-1zM953 58h1v1h-1zM953 347h1v1h-1zM954 58h1v1h-1zM954 347h1v1h-1zM958 58h1v1h-1zM958 347h1v1h-1zM959 58h1v1h-1zM959 347h1v1h-1zM960 58h1v1h-1zM960 347h1v1h-1zM964 58h1v1h-1zM964 347h1v1h-1zM965 58h1v1h-1zM965 347h1v1h-1zM966 58h1v1h-1zM966 347h1v1h-1zM970 58h1v1h-1zM970 347h1v1h-1zM971 58h1v1h-1zM971 347h1v1h-1zM972 58h1v1h-1zM972 347h1v1h-1zM976 58h1v1h-1zM976 347h1v1h-1zM977 58h1v1h-1zM977 347h1v1h-1zM978 58h1v1h-1zM978 347h1v1h-1zM982 58h1v1h-1zM982 347h1v1h-1zM983 58h1v1h-1zM983 347h1v1h-1zM984 58h1v1h-1zM984 347h1v1h-1zM988 58h1v1h-1zM988 347h1v1h-1zM989 58h1v1h-1zM989 347h1v1h-1zM990 58h1v1h-1zM990 347h1v1h-1zM994 58h1v1h-1zM994 347h1v1h-1zM995 58h1v1h-1zM995 347h1v1h-1zM996 58h1v1h-1zM996 347h1v1h-1zM1000 58h1v1h-1zM1000 347h1v1h-1zM1001 58h1v1h-1zM1001 347h1v1h-1zM1002 58h1v1h-1zM1002 347h1v1h-1zM1006 58h1v1h-1zM1006 347h1v1h-1zM1007 58h1v1h-1zM1007 347h1v1h-1zM1008 58h1v1h-1zM1008 347h1v1h-1zM1012 58h1v1h-1zM1012 347h1v1h-1zM1013 58h1v1h-1zM1013 347h1v1h-1zM1014 58h1v1h-1zM1014 347h1v1h-1zM63 49h1v1h-1zM94 49h1v1h-1zM63 50h1v1h-1zM94 50h1v1h-1zM63 51h1v1h-1zM94 51h1v1h-1zM63 55h1v1h-1zM94 55h1v1h-1zM63 56h1v1h-1zM94 56h1v1h-1zM63 57h1v1h-1zM94 57h1v1h-1zM63 61h1v1h-1zM94 61h1v1h-1zM63 62h1v1h-1zM94 62h1v1h-1zM63 63h1v1h-1zM94 63h1v1h-1zM63 67h1v1h-1zM94 67h1v1h-1zM63 68h1v1h-1zM94 68h1v1h-1zM63 69h1v1h-1zM94 69h1v1h-1zM63 73h1v1h-1zM94 73h1v1h-1zM63 74h1v1h-1zM94 74h1v1h-1zM63 75h1v1h-1zM94 75h1v1h-1zM63 79h1v1h-1zM94 79h1v1h-1zM63 80h1v1h-1zM94 80h1v1h-1zM63 81h1v1h-1zM94 81h1v1h-1zM63 85h1v1h-1zM94 85h1v1h-1zM63 86h1v1h-1zM94 86h1v1h-1zM63 87h1v1h-1zM94 87h1v1h-1zM63 91h1v1h-1zM94 91h1v1h-1zM63 92h1v1h-1zM94 92h1v1h-1zM63 93h1v1h-1zM94 93h1v1h-1zM63 97h1v1h-1zM94 97h1v1h-1zM63 98h1v1h-1zM94 98h1v1h-1zM63 99h1v1h-1zM94 99h1v1h-1zM63 103h1v1h-1zM94 103h1v1h-1zM63 104h1v1h-1zM94 104h1v1h-1zM63 105h1v1h-1zM94 105h1v1h-1zM63 109h1v1h-1zM94 109h1v1h-1zM63 110h1v1h-1zM94 110h1v1h-1zM63 111h1v1h-1zM94 111h1v1h-1zM63 115h1v1h-1zM94 115h1v1h-1zM63 116h1v1h-1zM94 116h1v1h-1zM63 117h1v1h-1zM94 117h1v1h-1zM63 121h1v1h-1zM94 121h1v1h-1zM63 122h1v1h-1zM94 122h1v1h-1zM63 123h1v1h-1zM94 123h1v1h-1zM63 127h1v1h-1zM94 127h1v1h-1zM63 128h1v1h-1zM94 128h1v1h-1zM63 129h1v1h-1zM94 129h1v1h-1zM63 133h1v1h-1zM94 133h1v1h-1zM63 134h1v1h-1zM94 134h1v1h-1zM63 135h1v1h-1zM94 135h1v1h-1zM63 139h1v1h-1zM94 139h1v1h-1zM63 140h1v1h-1zM94 140h1v1h-1zM63 141h1v1h-1zM94 141h1v1h-1zM63 145h1v1h-1zM94 145h1v1h-1zM63 146h1v1h-1zM94 146h1v1h-1zM63 147h1v1h-1zM94 147h1v1h-1zM63 151h1v1h-1zM94 151h1v1h-1zM63 152h1v1h-1zM94 152h1v1h-1zM63 153h1v1h-1zM94 153h1v1h-1zM63 157h1v1h-1zM94 157h1v1h-1zM63 158h1v1h-1zM94 158h1v1h-1zM63 159h1v1h-1zM94 159h1v1h-1zM63 163h1v1h-1zM94 163h1v1h-1zM63 164h1v1h-1zM94 164h1v1h-1zM63 165h1v1h-1zM94 165h1v1h-1zM63 169h1v1h-1zM94 169h1v1h-1zM63 170h1v1h-1zM94 170h1v1h-1zM63 171h1v1h-1zM94 171h1v1h-1zM63 175h1v1h-1zM94 175h1v1h-1zM63 176h1v1h-1zM94 176h1v1h-1zM63 177h1v1h-1zM94 177h1v1h-1zM63 181h1v1h-1zM94 181h1v1h-1zM63 182h1v1h-1zM94 182h1v1h-1zM63 183h1v1h-1zM94 183h1v1h-1zM63 187h1v1h-1zM94 187h1v1h-1zM63 188h1v1h-1zM94 188h1v1h-1zM63 189h1v1h-1zM94 189h1v1h-1zM63 193h1v1h-1zM94 193h1v1h-1zM63 194h1v1h-1zM94 194h1v1h-1zM63 195h1v1h-1zM94 195h1v1h-1zM63 199h1v1h-1zM94 199h1v1h-1zM63 200h1v1h-1zM94 200h1v1h-1zM63 201h1v1h-1zM94 201h1v1h-1zM63 205h1v1h-1zM94 205h1v1h-1zM63 206h1v1h-1zM94 206h1v1h-1zM63 207h1v1h-1zM94 207h1v1h-1zM63 211h1v1h-1zM94 211h1v1h-1zM63 212h1v1h-1zM94 212h1v1h-1zM63 213h1v1h-1zM94 213h1v1h-1zM63 217h1v1h-1zM94 217h1v1h-1zM63 218h1v1h-1zM94 218h1v1h-1zM63 219h1v1h-1zM94 219h1v1h-1zM63 223h1v1h-1zM94 223h1v1h-1zM63 224h1v1h-1zM94 224h1v1h-1zM63 225h1v1h-1zM94 225h1v1h-1zM63 229h1v1h-1zM94 229h1v1h-1zM63 230h1v1h-1zM94 230h1v1h-1zM63 231h1v1h-1zM94 231h1v1h-1zM63 235h1v1h-1zM94 235h1v1h-1zM63 236h1v1h-1zM94 236h1v1h-1zM63 237h1v1h-1zM94 237h1v1h-1zM63 241h1v1h-1zM94 241h1v1h-1zM63 242h1v1h-1zM94 242h1v1h-1zM63 243h1v1h-1zM94 243h1v1h-1zM63 247h1v1h-1zM94 247h1v1h-1zM63 248h1v1h-1zM94 248h1v1h-1zM63 249h1v1h-1zM94 249h1v1h-1zM63 253h1v1h-1zM94 253h1v1h-1zM63 254h1v1h-1zM94 254h1v1h-1zM63 255h1v1h-1zM94 255h1v1h-1zM63 259h1v1h-1zM94 259h1v1h-1zM63 260h1v1h-1zM94 260h1v1h-1zM63 261h1v1h-1zM94 261h1v1h-1zM63 265h1v1h-1zM94 265h1v1h-1zM63 266h1v1h-1zM94 266h1v1h-1zM63 267h1v1h-1zM94 267h1v1h-1zM63 271h1v1h-1zM94 271h1v1h-1zM63 272h1v1h-1zM94 272h1v1h-1zM63 273h1v1h-1zM94 273h1v1h-1zM63 277h1v1h-1zM94 277h1v1h-1zM63 278h1v1h-1zM94 278h1v1h-1zM63 279h1v1h-1zM94 279h1v1h-1zM63 283h1v1h-1zM94 283h1v1h-1zM63 284h1v1h-1zM94 284h1v1h-1zM63 285h1v1h-1zM94 285h1v1h-1zM63 289h1v1h-1zM94 289h1v1h-1zM63 290h1v1h-1zM94 290h1v1h-1zM63 291h1v1h-1zM94 291h1v1h-1zM63 295h1v1h-1zM94 295h1v1h-1zM63 296h1v1h-1zM94 296h1v1h-1zM63 297h1v1h-1zM94 297h1v1h-1zM63 301h1v1h-1zM94 301h1v1h-1zM63 302h1v1h-1zM94 302h1v1h-1zM63 303h1v1h-1zM94 303h1v1h-1zM63 307h1v1h-1zM94 307h1v1h-1zM63 308h1v1h-1zM94 308h1v1h-1zM63 309h1v1h-1zM94 309h1v1h-1zM63 313h1v1h-1zM94 313h1v1h-1zM63 314h1v1h-1zM94 314h1v1h-1zM63 315h1v1h-1zM94 315h1v1h-1zM63 319h1v1h-1zM94 319h1v1h-1zM63 320h1v1h-1zM94 320h1v1h-1zM63 321h1v1h-1zM94 321h1v1h-1zM63 325h1v1h-1zM94 325h1v1h-1zM63 326h1v1h-1zM94 326h1v1h-1zM63 327h1v1h-1zM94 327h1v1h-1zM63 331h1v1h-1zM94 331h1v1h-1zM63 332h1v1h-1zM94 332h1v1h-1zM63 333h1v1h-1zM94 333h1v1h-1zM63 337h1v1h-1zM94 337h1v1h-1zM63 338h1v1h-1zM94 338h1v1h-1zM63 339h1v1h-1zM94 339h1v1h-1zM63 343h1v1h-1zM94 343h1v1h-1zM63 344h1v1h-1zM94 344h1v1h-1zM63 345h1v1h-1zM94 345h1v1h-1zM63 349h1v1h-1zM94 349h1v1h-1zM63 350h1v1h-1zM94 350h1v1h-1zM63 351h1v1h-1zM94 351h1v1h-1zM63 355h1v1h-1zM94 355h1v1h-1zM63 356h1v1h-1zM94 356h1v1h-1zM63 357h1v1h-1zM94 357h1v1h-1zM63 361h1v1h-1zM94 361h1v1h-1zM63 362h1v1h-1zM94 362h1v1h-1zM63 363h1v1h-1zM94 363h1v1h-1zM63 367h1v1h-1zM94 367h1v1h-1zM63 368h1v1h-1zM94 368h1v1h-1zM63 369h1v1h-1zM94 369h1v1h-1z" fill="#ffffff"/>
</g>
<rect x="821" y="28" width="52" height="18" fill="#000000"/>
<rect x="821.5" y="28.5" width="51" height="17" fill="none" stroke="#ffffff" stroke-width="1" stroke-dasharray="3 3"/>
<text x="823" y="41" font-size="14" font-weight="bold" fill="#00ff00" textLength="48.56" lengthAdjust="spacingAndGlyphs">V(n005)</text>
<text x="19" y="99" font-size="14" font-weight="normal" fill="#8a4646" textLength="86.97" lengthAdjust="spacingAndGlyphs">Frank N Furter</text>
<text x="20" y="100" font-size="14" font-weight="normal" fill="#e4dcdc" textLength="86.97" lengthAdjust="spacingAndGlyphs">Frank N Furter</text>
<text x="19" y="119" font-size="11" font-weight="normal" fill="#8a4646" textLength="109.49" lengthAdjust="spacingAndGlyphs">www.thebackshed.com</text>
<text x="20" y="120" font-size="11" font-weight="normal" fill="#e4dcdc" textLength="109.49" lengthAdjust="spacingAndGlyphs">www.thebackshed.com</text>
<text x="20" y="134" font-size="11" font-weight="normal" fill="#8a4646" textLength="51.42" lengthAdjust="spacingAndGlyphs">2023-02-11</text>
<text x="21" y="135" font-size="11" font-weight="normal" fill="#e4dcdc" textLength="51.42" lengthAdjust="spacingAndGlyphs">2023-02-11</text>
<rect x="1" y="406" width="1015" height="1" fill="#3c3c3c"/>
<rect x="0" y="407" width="1" height="2" fill="#3c3c3c"/>
<rect x="1" y="407" width="1015" height="1" fill="#f4f8fc"/>
<rect x="0" y="408" width="1016" height="29" fill="url(#tb2)"/>
<rect x="0" y="437" width="5" height="382" fill="#b9d1ea"/>
<text x="27" y="430" font-size="12.5" font-weight="normal" fill="#10081a" textLength="88.16" lengthAdjust="spacingAndGlyphs" stroke="#10081a" stroke-width="0.25">Push-Pull_03.asc</text>
<rect x="9" y="424" width="4" height="1" fill="#0000ff"/>
<rect x="12" y="420" width="2" height="9" fill="#0000ff"/>
<line x1="14.5" y1="421.5" x2="19.5" y2="417.5" stroke="#0000ff" stroke-width="1" stroke-linecap="square"/>
<line x1="14.5" y1="428.5" x2="19.5" y2="432.5" stroke="#0000ff" stroke-width="1" stroke-linecap="square"/>
<rect x="16" y="430" width="2" height="2" fill="#0000ff"/>
<rect x="5" y="437" width="1011" height="1" fill="#6d6d6d"/>
<rect x="6" y="438" width="1010" height="1" fill="#a0a0a0"/>
<rect x="5" y="437" width="1" height="381" fill="#6d6d6d"/>
<rect x="6" y="438" width="1" height="379" fill="#a0a0a0"/>
<rect x="7" y="439" width="1009" height="378" fill="#c0c0c0"/>
<rect x="6" y="817" width="1010" height="1" fill="#e8e8e8"/>
<rect x="5" y="818" width="1011" height="1" fill="#ffffff"/>
<rect x="0" y="819" width="1016" height="6" fill="#b9d1ea"/>
<rect x="0" y="825" width="1016" height="1" fill="#30d8f0"/>
<rect x="0" y="826" width="1016" height="1" fill="#101010"/>
<rect x="0" y="827" width="1016" height="2" fill="#ffffff"/>
<rect x="0" y="829" width="1016" height="1" fill="#e0e0e0"/>
<rect x="0" y="830" width="1016" height="3" fill="#f0f0f0"/>
<path d="M14 450h1v1h-1zM14 463h1v1h-1zM14 476h1v1h-1zM14 489h1v1h-1zM14 502h1v1h-1zM14 515h1v1h-1zM14 528h1v1h-1zM14 541h1v1h-1zM14 554h1v1h-1zM14 567h1v1h-1zM14 580h1v1h-1zM14 593h1v1h-1zM14 606h1v1h-1zM14 619h1v1h-1zM14 632h1v1h-1zM14 645h1v1h-1zM14 658h1v1h-1zM14 671h1v1h-1zM14 684h1v1h-1zM14 697h1v1h-1zM14 710h1v1h-1zM14 723h1v1h-1zM14 736h1v1h-1zM14 749h1v1h-1zM14 762h1v1h-1zM14 775h1v1h-1zM14 788h1v1h-1zM14 802h1v1h-1zM27 450h1v1h-1zM27 463h1v1h-1zM27 476h1v1h-1zM27 489h1v1h-1zM27 502h1v1h-1zM27 515h1v1h-1zM27 528h1v1h-1zM27 541h1v1h-1zM27 554h1v1h-1zM27 567h1v1h-1zM27 580h1v1h-1zM27 593h1v1h-1zM27 606h1v1h-1zM27 619h1v1h-1zM27 632h1v1h-1zM27 645h1v1h-1zM27 658h1v1h-1zM27 671h1v1h-1zM27 684h1v1h-1zM27 697h1v1h-1zM27 710h1v1h-1zM27 723h1v1h-1zM27 736h1v1h-1zM27 749h1v1h-1zM27 762h1v1h-1zM27 775h1v1h-1zM27 788h1v1h-1zM27 802h1v1h-1zM40 450h1v1h-1zM40 463h1v1h-1zM40 476h1v1h-1zM40 489h1v1h-1zM40 502h1v1h-1zM40 515h1v1h-1zM40 528h1v1h-1zM40 541h1v1h-1zM40 554h1v1h-1zM40 567h1v1h-1zM40 580h1v1h-1zM40 593h1v1h-1zM40 606h1v1h-1zM40 619h1v1h-1zM40 632h1v1h-1zM40 645h1v1h-1zM40 658h1v1h-1zM40 671h1v1h-1zM40 684h1v1h-1zM40 697h1v1h-1zM40 710h1v1h-1zM40 723h1v1h-1zM40 736h1v1h-1zM40 749h1v1h-1zM40 762h1v1h-1zM40 775h1v1h-1zM40 788h1v1h-1zM40 802h1v1h-1zM53 450h1v1h-1zM53 463h1v1h-1zM53 476h1v1h-1zM53 489h1v1h-1zM53 502h1v1h-1zM53 515h1v1h-1zM53 528h1v1h-1zM53 541h1v1h-1zM53 554h1v1h-1zM53 567h1v1h-1zM53 580h1v1h-1zM53 593h1v1h-1zM53 606h1v1h-1zM53 619h1v1h-1zM53 632h1v1h-1zM53 645h1v1h-1zM53 658h1v1h-1zM53 671h1v1h-1zM53 684h1v1h-1zM53 697h1v1h-1zM53 710h1v1h-1zM53 723h1v1h-1zM53 736h1v1h-1zM53 749h1v1h-1zM53 762h1v1h-1zM53 775h1v1h-1zM53 788h1v1h-1zM53 802h1v1h-1zM66 450h1v1h-1zM66 463h1v1h-1zM66 476h1v1h-1zM66 489h1v1h-1zM66 502h1v1h-1zM66 515h1v1h-1zM66 528h1v1h-1zM66 541h1v1h-1zM66 554h1v1h-1zM66 567h1v1h-1zM66 580h1v1h-1zM66 593h1v1h-1zM66 606h1v1h-1zM66 619h1v1h-1zM66 632h1v1h-1zM66 645h1v1h-1zM66 658h1v1h-1zM66 671h1v1h-1zM66 684h1v1h-1zM66 697h1v1h-1zM66 710h1v1h-1zM66 723h1v1h-1zM66 736h1v1h-1zM66 749h1v1h-1zM66 762h1v1h-1zM66 775h1v1h-1zM66 788h1v1h-1zM66 802h1v1h-1zM79 450h1v1h-1zM79 463h1v1h-1zM79 476h1v1h-1zM79 489h1v1h-1zM79 502h1v1h-1zM79 515h1v1h-1zM79 528h1v1h-1zM79 541h1v1h-1zM79 554h1v1h-1zM79 567h1v1h-1zM79 580h1v1h-1zM79 593h1v1h-1zM79 606h1v1h-1zM79 619h1v1h-1zM79 632h1v1h-1zM79 645h1v1h-1zM79 658h1v1h-1zM79 671h1v1h-1zM79 684h1v1h-1zM79 697h1v1h-1zM79 710h1v1h-1zM79 723h1v1h-1zM79 736h1v1h-1zM79 749h1v1h-1zM79 762h1v1h-1zM79 775h1v1h-1zM79 788h1v1h-1zM79 802h1v1h-1zM92 450h1v1h-1zM92 463h1v1h-1zM92 476h1v1h-1zM92 489h1v1h-1zM92 502h1v1h-1zM92 515h1v1h-1zM92 528h1v1h-1zM92 541h1v1h-1zM92 554h1v1h-1zM92 567h1v1h-1zM92 580h1v1h-1zM92 593h1v1h-1zM92 606h1v1h-1zM92 619h1v1h-1zM92 632h1v1h-1zM92 645h1v1h-1zM92 658h1v1h-1zM92 671h1v1h-1zM92 684h1v1h-1zM92 697h1v1h-1zM92 710h1v1h-1zM92 723h1v1h-1zM92 736h1v1h-1zM92 749h1v1h-1zM92 762h1v1h-1zM92 775h1v1h-1zM92 788h1v1h-1zM92 802h1v1h-1zM105 450h1v1h-1zM105 463h1v1h-1zM105 476h1v1h-1zM105 489h1v1h-1zM105 502h1v1h-1zM105 515h1v1h-1zM105 528h1v1h-1zM105 541h1v1h-1zM105 554h1v1h-1zM105 567h1v1h-1zM105 580h1v1h-1zM105 593h1v1h-1zM105 606h1v1h-1zM105 619h1v1h-1zM105 632h1v1h-1zM105 645h1v1h-1zM105 658h1v1h-1zM105 671h1v1h-1zM105 684h1v1h-1zM105 697h1v1h-1zM105 710h1v1h-1zM105 723h1v1h-1zM105 736h1v1h-1zM105 749h1v1h-1zM105 762h1v1h-1zM105 775h1v1h-1zM105 788h1v1h-1zM105 802h1v1h-1zM118 450h1v1h-1zM118 463h1v1h-1zM118 476h1v1h-1zM118 489h1v1h-1zM118 502h1v1h-1zM118 515h1v1h-1zM118 528h1v1h-1zM118 541h1v1h-1zM118 554h1v1h-1zM118 567h1v1h-1zM118 580h1v1h-1zM118 593h1v1h-1zM118 606h1v1h-1zM118 619h1v1h-1zM118 632h1v1h-1zM118 645h1v1h-1zM118 658h1v1h-1zM118 671h1v1h-1zM118 684h1v1h-1zM118 697h1v1h-1zM118 710h1v1h-1zM118 723h1v1h-1zM118 736h1v1h-1zM118 749h1v1h-1zM118 762h1v1h-1zM118 775h1v1h-1zM118 788h1v1h-1zM118 802h1v1h-1zM131 450h1v1h-1zM131 463h1v1h-1zM131 476h1v1h-1zM131 489h1v1h-1zM131 502h1v1h-1zM131 515h1v1h-1zM131 528h1v1h-1zM131 541h1v1h-1zM131 554h1v1h-1zM131 567h1v1h-1zM131 580h1v1h-1zM131 593h1v1h-1zM131 606h1v1h-1zM131 619h1v1h-1zM131 632h1v1h-1zM131 645h1v1h-1zM131 658h1v1h-1zM131 671h1v1h-1zM131 684h1v1h-1zM131 697h1v1h-1zM131 710h1v1h-1zM131 723h1v1h-1zM131 736h1v1h-1zM131 749h1v1h-1zM131 762h1v1h-1zM131 775h1v1h-1zM131 788h1v1h-1zM131 802h1v1h-1zM144 450h1v1h-1zM144 463h1v1h-1zM144 476h1v1h-1zM144 489h1v1h-1zM144 502h1v1h-1zM144 515h1v1h-1zM144 528h1v1h-1zM144 541h1v1h-1zM144 554h1v1h-1zM144 567h1v1h-1zM144 580h1v1h-1zM144 593h1v1h-1zM144 606h1v1h-1zM144 619h1v1h-1zM144 632h1v1h-1zM144 645h1v1h-1zM144 658h1v1h-1zM144 671h1v1h-1zM144 684h1v1h-1zM144 697h1v1h-1zM144 710h1v1h-1zM144 723h1v1h-1zM144 736h1v1h-1zM144 749h1v1h-1zM144 762h1v1h-1zM144 775h1v1h-1zM144 788h1v1h-1zM144 802h1v1h-1zM157 450h1v1h-1zM157 463h1v1h-1zM157 476h1v1h-1zM157 489h1v1h-1zM157 502h1v1h-1zM157 515h1v1h-1zM157 528h1v1h-1zM157 541h1v1h-1zM157 554h1v1h-1zM157 567h1v1h-1zM157 580h1v1h-1zM157 593h1v1h-1zM157 606h1v1h-1zM157 619h1v1h-1zM157 632h1v1h-1zM157 645h1v1h-1zM157 658h1v1h-1zM157 671h1v1h-1zM157 684h1v1h-1zM157 697h1v1h-1zM157 710h1v1h-1zM157 723h1v1h-1zM157 736h1v1h-1zM157 749h1v1h-1zM157 762h1v1h-1zM157 775h1v1h-1zM157 788h1v1h-1zM157 802h1v1h-1zM170 450h1v1h-1zM170 463h1v1h-1zM170 476h1v1h-1zM170 489h1v1h-1zM170 502h1v1h-1zM170 515h1v1h-1zM170 528h1v1h-1zM170 541h1v1h-1zM170 554h1v1h-1zM170 567h1v1h-1zM170 580h1v1h-1zM170 593h1v1h-1zM170 606h1v1h-1zM170 619h1v1h-1zM170 632h1v1h-1zM170 645h1v1h-1zM170 658h1v1h-1zM170 671h1v1h-1zM170 684h1v1h-1zM170 697h1v1h-1zM170 710h1v1h-1zM170 723h1v1h-1zM170 736h1v1h-1zM170 749h1v1h-1zM170 762h1v1h-1zM170 775h1v1h-1zM170 788h1v1h-1zM170 802h1v1h-1zM183 450h1v1h-1zM183 463h1v1h-1zM183 476h1v1h-1zM183 489h1v1h-1zM183 502h1v1h-1zM183 515h1v1h-1zM183 528h1v1h-1zM183 541h1v1h-1zM183 554h1v1h-1zM183 567h1v1h-1zM183 580h1v1h-1zM183 593h1v1h-1zM183 606h1v1h-1zM183 619h1v1h-1zM183 632h1v1h-1zM183 645h1v1h-1zM183 658h1v1h-1zM183 671h1v1h-1zM183 684h1v1h-1zM183 697h1v1h-1zM183 710h1v1h-1zM183 723h1v1h-1zM183 736h1v1h-1zM183 749h1v1h-1zM183 762h1v1h-1zM183 775h1v1h-1zM183 788h1v1h-1zM183 802h1v1h-1zM196 450h1v1h-1zM196 463h1v1h-1zM196 476h1v1h-1zM196 489h1v1h-1zM196 502h1v1h-1zM196 515h1v1h-1zM196 528h1v1h-1zM196 541h1v1h-1zM196 554h1v1h-1zM196 567h1v1h-1zM196 580h1v1h-1zM196 593h1v1h-1zM196 606h1v1h-1zM196 619h1v1h-1zM196 632h1v1h-1zM196 645h1v1h-1zM196 658h1v1h-1zM196 671h1v1h-1zM196 684h1v1h-1zM196 697h1v1h-1zM196 710h1v1h-1zM196 723h1v1h-1zM196 736h1v1h-1zM196 749h1v1h-1zM196 762h1v1h-1zM196 775h1v1h-1zM196 788h1v1h-1zM196 802h1v1h-1zM209 450h1v1h-1zM209 463h1v1h-1zM209 476h1v1h-1zM209 489h1v1h-1zM209 502h1v1h-1zM209 515h1v1h-1zM209 528h1v1h-1zM209 541h1v1h-1zM209 554h1v1h-1zM209 567h1v1h-1zM209 580h1v1h-1zM209 593h1v1h-1zM209 606h1v1h-1zM209 619h1v1h-1zM209 632h1v1h-1zM209 645h1v1h-1zM209 658h1v1h-1zM209 671h1v1h-1zM209 684h1v1h-1zM209 697h1v1h-1zM209 710h1v1h-1zM209 723h1v1h-1zM209 736h1v1h-1zM209 749h1v1h-1zM209 762h1v1h-1zM209 775h1v1h-1zM209 788h1v1h-1zM209 802h1v1h-1zM222 450h1v1h-1zM222 463h1v1h-1zM222 476h1v1h-1zM222 489h1v1h-1zM222 502h1v1h-1zM222 515h1v1h-1zM222 528h1v1h-1zM222 541h1v1h-1zM222 554h1v1h-1zM222 567h1v1h-1zM222 580h1v1h-1zM222 593h1v1h-1zM222 606h1v1h-1zM222 619h1v1h-1zM222 632h1v1h-1zM222 645h1v1h-1zM222 658h1v1h-1zM222 671h1v1h-1zM222 684h1v1h-1zM222 697h1v1h-1zM222 710h1v1h-1zM222 723h1v1h-1zM222 736h1v1h-1zM222 749h1v1h-1zM222 762h1v1h-1zM222 775h1v1h-1zM222 788h1v1h-1zM222 802h1v1h-1zM235 450h1v1h-1zM235 463h1v1h-1zM235 476h1v1h-1zM235 489h1v1h-1zM235 502h1v1h-1zM235 515h1v1h-1zM235 528h1v1h-1zM235 541h1v1h-1zM235 554h1v1h-1zM235 567h1v1h-1zM235 580h1v1h-1zM235 593h1v1h-1zM235 606h1v1h-1zM235 619h1v1h-1zM235 632h1v1h-1zM235 645h1v1h-1zM235 658h1v1h-1zM235 671h1v1h-1zM235 684h1v1h-1zM235 697h1v1h-1zM235 710h1v1h-1zM235 723h1v1h-1zM235 736h1v1h-1zM235 749h1v1h-1zM235 762h1v1h-1zM235 775h1v1h-1zM235 788h1v1h-1zM235 802h1v1h-1zM248 450h1v1h-1zM248 463h1v1h-1zM248 476h1v1h-1zM248 489h1v1h-1zM248 502h1v1h-1zM248 515h1v1h-1zM248 528h1v1h-1zM248 541h1v1h-1zM248 554h1v1h-1zM248 567h1v1h-1zM248 580h1v1h-1zM248 593h1v1h-1zM248 606h1v1h-1zM248 619h1v1h-1zM248 632h1v1h-1zM248 645h1v1h-1zM248 658h1v1h-1zM248 671h1v1h-1zM248 684h1v1h-1zM248 697h1v1h-1zM248 710h1v1h-1zM248 723h1v1h-1zM248 736h1v1h-1zM248 749h1v1h-1zM248 762h1v1h-1zM248 775h1v1h-1zM248 788h1v1h-1zM248 802h1v1h-1zM261 450h1v1h-1zM261 463h1v1h-1zM261 476h1v1h-1zM261 489h1v1h-1zM261 502h1v1h-1zM261 515h1v1h-1zM261 528h1v1h-1zM261 541h1v1h-1zM261 554h1v1h-1zM261 567h1v1h-1zM261 580h1v1h-1zM261 593h1v1h-1zM261 606h1v1h-1zM261 619h1v1h-1zM261 632h1v1h-1zM261 645h1v1h-1zM261 658h1v1h-1zM261 671h1v1h-1zM261 684h1v1h-1zM261 697h1v1h-1zM261 710h1v1h-1zM261 723h1v1h-1zM261 736h1v1h-1zM261 749h1v1h-1zM261 762h1v1h-1zM261 775h1v1h-1zM261 788h1v1h-1zM261 802h1v1h-1zM274 450h1v1h-1zM274 463h1v1h-1zM274 476h1v1h-1zM274 489h1v1h-1zM274 502h1v1h-1zM274 515h1v1h-1zM274 528h1v1h-1zM274 541h1v1h-1zM274 554h1v1h-1zM274 567h1v1h-1zM274 580h1v1h-1zM274 593h1v1h-1zM274 606h1v1h-1zM274 619h1v1h-1zM274 632h1v1h-1zM274 645h1v1h-1zM274 658h1v1h-1zM274 671h1v1h-1zM274 684h1v1h-1zM274 697h1v1h-1zM274 710h1v1h-1zM274 723h1v1h-1zM274 736h1v1h-1zM274 749h1v1h-1zM274 762h1v1h-1zM274 775h1v1h-1zM274 788h1v1h-1zM274 802h1v1h-1zM287 450h1v1h-1zM287 463h1v1h-1zM287 476h1v1h-1zM287 489h1v1h-1zM287 502h1v1h-1zM287 515h1v1h-1zM287 528h1v1h-1zM287 541h1v1h-1zM287 554h1v1h-1zM287 567h1v1h-1zM287 580h1v1h-1zM287 593h1v1h-1zM287 606h1v1h-1zM287 619h1v1h-1zM287 632h1v1h-1zM287 645h1v1h-1zM287 658h1v1h-1zM287 671h1v1h-1zM287 684h1v1h-1zM287 697h1v1h-1zM287 710h1v1h-1zM287 723h1v1h-1zM287 736h1v1h-1zM287 749h1v1h-1zM287 762h1v1h-1zM287 775h1v1h-1zM287 788h1v1h-1zM287 802h1v1h-1zM300 450h1v1h-1zM300 463h1v1h-1zM300 476h1v1h-1zM300 489h1v1h-1zM300 502h1v1h-1zM300 515h1v1h-1zM300 528h1v1h-1zM300 541h1v1h-1zM300 554h1v1h-1zM300 567h1v1h-1zM300 580h1v1h-1zM300 593h1v1h-1zM300 606h1v1h-1zM300 619h1v1h-1zM300 632h1v1h-1zM300 645h1v1h-1zM300 658h1v1h-1zM300 671h1v1h-1zM300 684h1v1h-1zM300 697h1v1h-1zM300 710h1v1h-1zM300 723h1v1h-1zM300 736h1v1h-1zM300 749h1v1h-1zM300 762h1v1h-1zM300 775h1v1h-1zM300 788h1v1h-1zM300 802h1v1h-1zM313 450h1v1h-1zM313 463h1v1h-1zM313 476h1v1h-1zM313 489h1v1h-1zM313 502h1v1h-1zM313 515h1v1h-1zM313 528h1v1h-1zM313 541h1v1h-1zM313 554h1v1h-1zM313 567h1v1h-1zM313 580h1v1h-1zM313 593h1v1h-1zM313 606h1v1h-1zM313 619h1v1h-1zM313 632h1v1h-1zM313 645h1v1h-1zM313 658h1v1h-1zM313 671h1v1h-1zM313 684h1v1h-1zM313 697h1v1h-1zM313 710h1v1h-1zM313 723h1v1h-1zM313 736h1v1h-1zM313 749h1v1h-1zM313 762h1v1h-1zM313 775h1v1h-1zM313 788h1v1h-1zM313 802h1v1h-1zM326 450h1v1h-1zM326 463h1v1h-1zM326 476h1v1h-1zM326 489h1v1h-1zM326 502h1v1h-1zM326 515h1v1h-1zM326 528h1v1h-1zM326 541h1v1h-1zM326 554h1v1h-1zM326 567h1v1h-1zM326 580h1v1h-1zM326 593h1v1h-1zM326 606h1v1h-1zM326 619h1v1h-1zM326 632h1v1h-1zM326 645h1v1h-1zM326 658h1v1h-1zM326 671h1v1h-1zM326 684h1v1h-1zM326 697h1v1h-1zM326 710h1v1h-1zM326 723h1v1h-1zM326 736h1v1h-1zM326 749h1v1h-1zM326 762h1v1h-1zM326 775h1v1h-1zM326 788h1v1h-1zM326 802h1v1h-1zM339 450h1v1h-1zM339 463h1v1h-1zM339 476h1v1h-1zM339 489h1v1h-1zM339 502h1v1h-1zM339 515h1v1h-1zM339 528h1v1h-1zM339 541h1v1h-1zM339 554h1v1h-1zM339 567h1v1h-1zM339 580h1v1h-1zM339 593h1v1h-1zM339 606h1v1h-1zM339 619h1v1h-1zM339 632h1v1h-1zM339 645h1v1h-1zM339 658h1v1h-1zM339 671h1v1h-1zM339 684h1v1h-1zM339 697h1v1h-1zM339 710h1v1h-1zM339 723h1v1h-1zM339 736h1v1h-1zM339 749h1v1h-1zM339 762h1v1h-1zM339 775h1v1h-1zM339 788h1v1h-1zM339 802h1v1h-1zM352 450h1v1h-1zM352 463h1v1h-1zM352 476h1v1h-1zM352 489h1v1h-1zM352 502h1v1h-1zM352 515h1v1h-1zM352 528h1v1h-1zM352 541h1v1h-1zM352 554h1v1h-1zM352 567h1v1h-1zM352 580h1v1h-1zM352 593h1v1h-1zM352 606h1v1h-1zM352 619h1v1h-1zM352 632h1v1h-1zM352 645h1v1h-1zM352 658h1v1h-1zM352 671h1v1h-1zM352 684h1v1h-1zM352 697h1v1h-1zM352 710h1v1h-1zM352 723h1v1h-1zM352 736h1v1h-1zM352 749h1v1h-1zM352 762h1v1h-1zM352 775h1v1h-1zM352 788h1v1h-1zM352 802h1v1h-1zM365 450h1v1h-1zM365 463h1v1h-1zM365 476h1v1h-1zM365 489h1v1h-1zM365 502h1v1h-1zM365 515h1v1h-1zM365 528h1v1h-1zM365 541h1v1h-1zM365 554h1v1h-1zM365 567h1v1h-1zM365 580h1v1h-1zM365 593h1v1h-1zM365 606h1v1h-1zM365 619h1v1h-1zM365 632h1v1h-1zM365 645h1v1h-1zM365 658h1v1h-1zM365 671h1v1h-1zM365 684h1v1h-1zM365 697h1v1h-1zM365 710h1v1h-1zM365 723h1v1h-1zM365 736h1v1h-1zM365 749h1v1h-1zM365 762h1v1h-1zM365 775h1v1h-1zM365 788h1v1h-1zM365 802h1v1h-1zM379 450h1v1h-1zM379 463h1v1h-1zM379 476h1v1h-1zM379 489h1v1h-1zM379 502h1v1h-1zM379 515h1v1h-1zM379 528h1v1h-1zM379 541h1v1h-1zM379 554h1v1h-1zM379 567h1v1h-1zM379 580h1v1h-1zM379 593h1v1h-1zM379 606h1v1h-1zM379 619h1v1h-1zM379 632h1v1h-1zM379 645h1v1h-1zM379 658h1v1h-1zM379 671h1v1h-1zM379 684h1v1h-1zM379 697h1v1h-1zM379 710h1v1h-1zM379 723h1v1h-1zM379 736h1v1h-1zM379 749h1v1h-1zM379 762h1v1h-1zM379 775h1v1h-1zM379 788h1v1h-1zM379 802h1v1h-1zM392 450h1v1h-1zM392 463h1v1h-1zM392 476h1v1h-1zM392 489h1v1h-1zM392 502h1v1h-1zM392 515h1v1h-1zM392 528h1v1h-1zM392 541h1v1h-1zM392 554h1v1h-1zM392 567h1v1h-1zM392 580h1v1h-1zM392 593h1v1h-1zM392 606h1v1h-1zM392 619h1v1h-1zM392 632h1v1h-1zM392 645h1v1h-1zM392 658h1v1h-1zM392 671h1v1h-1zM392 684h1v1h-1zM392 697h1v1h-1zM392 710h1v1h-1zM392 723h1v1h-1zM392 736h1v1h-1zM392 749h1v1h-1zM392 762h1v1h-1zM392 775h1v1h-1zM392 788h1v1h-1zM392 802h1v1h-1zM405 450h1v1h-1zM405 463h1v1h-1zM405 476h1v1h-1zM405 489h1v1h-1zM405 502h1v1h-1zM405 515h1v1h-1zM405 528h1v1h-1zM405 541h1v1h-1zM405 554h1v1h-1zM405 567h1v1h-1zM405 580h1v1h-1zM405 593h1v1h-1zM405 606h1v1h-1zM405 619h1v1h-1zM405 632h1v1h-1zM405 645h1v1h-1zM405 658h1v1h-1zM405 671h1v1h-1zM405 684h1v1h-1zM405 697h1v1h-1zM405 710h1v1h-1zM405 723h1v1h-1zM405 736h1v1h-1zM405 749h1v1h-1zM405 762h1v1h-1zM405 775h1v1h-1zM405 788h1v1h-1zM405 802h1v1h-1zM418 450h1v1h-1zM418 463h1v1h-1zM418 476h1v1h-1zM418 489h1v1h-1zM418 502h1v1h-1zM418 515h1v1h-1zM418 528h1v1h-1zM418 541h1v1h-1zM418 554h1v1h-1zM418 567h1v1h-1zM418 580h1v1h-1zM418 593h1v1h-1zM418 606h1v1h-1zM418 619h1v1h-1zM418 632h1v1h-1zM418 645h1v1h-1zM418 658h1v1h-1zM418 671h1v1h-1zM418 684h1v1h-1zM418 697h1v1h-1zM418 710h1v1h-1zM418 723h1v1h-1zM418 736h1v1h-1zM418 749h1v1h-1zM418 762h1v1h-1zM418 775h1v1h-1zM418 788h1v1h-1zM418 802h1v1h-1zM431 450h1v1h-1zM431 463h1v1h-1zM431 476h1v1h-1zM431 489h1v1h-1zM431 502h1v1h-1zM431 515h1v1h-1zM431 528h1v1h-1zM431 541h1v1h-1zM431 554h1v1h-1zM431 567h1v1h-1zM431 580h1v1h-1zM431 593h1v1h-1zM431 606h1v1h-1zM431 619h1v1h-1zM431 632h1v1h-1zM431 645h1v1h-1zM431 658h1v1h-1zM431 671h1v1h-1zM431 684h1v1h-1zM431 697h1v1h-1zM431 710h1v1h-1zM431 723h1v1h-1zM431 736h1v1h-1zM431 749h1v1h-1zM431 762h1v1h-1zM431 775h1v1h-1zM431 788h1v1h-1zM431 802h1v1h-1zM444 450h1v1h-1zM444 463h1v1h-1zM444 476h1v1h-1zM444 489h1v1h-1zM444 502h1v1h-1zM444 515h1v1h-1zM444 528h1v1h-1zM444 541h1v1h-1zM444 554h1v1h-1zM444 567h1v1h-1zM444 580h1v1h-1zM444 593h1v1h-1zM444 606h1v1h-1zM444 619h1v1h-1zM444 632h1v1h-1zM444 645h1v1h-1zM444 658h1v1h-1zM444 671h1v1h-1zM444 684h1v1h-1zM444 697h1v1h-1zM444 710h1v1h-1zM444 723h1v1h-1zM444 736h1v1h-1zM444 749h1v1h-1zM444 762h1v1h-1zM444 775h1v1h-1zM444 788h1v1h-1zM444 802h1v1h-1zM457 450h1v1h-1zM457 463h1v1h-1zM457 476h1v1h-1zM457 489h1v1h-1zM457 502h1v1h-1zM457 515h1v1h-1zM457 528h1v1h-1zM457 541h1v1h-1zM457 554h1v1h-1zM457 567h1v1h-1zM457 580h1v1h-1zM457 593h1v1h-1zM457 606h1v1h-1zM457 619h1v1h-1zM457 632h1v1h-1zM457 645h1v1h-1zM457 658h1v1h-1zM457 671h1v1h-1zM457 684h1v1h-1zM457 697h1v1h-1zM457 710h1v1h-1zM457 723h1v1h-1zM457 736h1v1h-1zM457 749h1v1h-1zM457 762h1v1h-1zM457 775h1v1h-1zM457 788h1v1h-1zM457 802h1v1h-1zM470 450h1v1h-1zM470 463h1v1h-1zM470 476h1v1h-1zM470 489h1v1h-1zM470 502h1v1h-1zM470 515h1v1h-1zM470 528h1v1h-1zM470 541h1v1h-1zM470 554h1v1h-1zM470 567h1v1h-1zM470 580h1v1h-1zM470 593h1v1h-1zM470 606h1v1h-1zM470 619h1v1h-1zM470 632h1v1h-1zM470 645h1v1h-1zM470 658h1v1h-1zM470 671h1v1h-1zM470 684h1v1h-1zM470 697h1v1h-1zM470 710h1v1h-1zM470 723h1v1h-1zM470 736h1v1h-1zM470 749h1v1h-1zM470 762h1v1h-1zM470 775h1v1h-1zM470 788h1v1h-1zM470 802h1v1h-1zM483 450h1v1h-1zM483 463h1v1h-1zM483 476h1v1h-1zM483 489h1v1h-1zM483 502h1v1h-1zM483 515h1v1h-1zM483 528h1v1h-1zM483 541h1v1h-1zM483 554h1v1h-1zM483 567h1v1h-1zM483 580h1v1h-1zM483 593h1v1h-1zM483 606h1v1h-1zM483 619h1v1h-1zM483 632h1v1h-1zM483 645h1v1h-1zM483 658h1v1h-1zM483 671h1v1h-1zM483 684h1v1h-1zM483 697h1v1h-1zM483 710h1v1h-1zM483 723h1v1h-1zM483 736h1v1h-1zM483 749h1v1h-1zM483 762h1v1h-1zM483 775h1v1h-1zM483 788h1v1h-1zM483 802h1v1h-1zM496 450h1v1h-1zM496 463h1v1h-1zM496 476h1v1h-1zM496 489h1v1h-1zM496 502h1v1h-1zM496 515h1v1h-1zM496 528h1v1h-1zM496 541h1v1h-1zM496 554h1v1h-1zM496 567h1v1h-1zM496 580h1v1h-1zM496 593h1v1h-1zM496 606h1v1h-1zM496 619h1v1h-1zM496 632h1v1h-1zM496 645h1v1h-1zM496 658h1v1h-1zM496 671h1v1h-1zM496 684h1v1h-1zM496 697h1v1h-1zM496 710h1v1h-1zM496 723h1v1h-1zM496 736h1v1h-1zM496 749h1v1h-1zM496 762h1v1h-1zM496 775h1v1h-1zM496 788h1v1h-1zM496 802h1v1h-1zM509 450h1v1h-1zM509 463h1v1h-1zM509 476h1v1h-1zM509 489h1v1h-1zM509 502h1v1h-1zM509 515h1v1h-1zM509 528h1v1h-1zM509 541h1v1h-1zM509 554h1v1h-1zM509 567h1v1h-1zM509 580h1v1h-1zM509 593h1v1h-1zM509 606h1v1h-1zM509 619h1v1h-1zM509 632h1v1h-1zM509 645h1v1h-1zM509 658h1v1h-1zM509 671h1v1h-1zM509 684h1v1h-1zM509 697h1v1h-1zM509 710h1v1h-1zM509 723h1v1h-1zM509 736h1v1h-1zM509 749h1v1h-1zM509 762h1v1h-1zM509 775h1v1h-1zM509 788h1v1h-1zM509 802h1v1h-1zM522 450h1v1h-1zM522 463h1v1h-1zM522 476h1v1h-1zM522 489h1v1h-1zM522 502h1v1h-1zM522 515h1v1h-1zM522 528h1v1h-1zM522 541h1v1h-1zM522 554h1v1h-1zM522 567h1v1h-1zM522 580h1v1h-1zM522 593h1v1h-1zM522 606h1v1h-1zM522 619h1v1h-1zM522 632h1v1h-1zM522 645h1v1h-1zM522 658h1v1h-1zM522 671h1v1h-1zM522 684h1v1h-1zM522 697h1v1h-1zM522 710h1v1h-1zM522 723h1v1h-1zM522 736h1v1h-1zM522 749h1v1h-1zM522 762h1v1h-1zM522 775h1v1h-1zM522 788h1v1h-1zM522 802h1v1h-1zM535 450h1v1h-1zM535 463h1v1h-1zM535 476h1v1h-1zM535 489h1v1h-1zM535 502h1v1h-1zM535 515h1v1h-1zM535 528h1v1h-1zM535 541h1v1h-1zM535 554h1v1h-1zM535 567h1v1h-1zM535 580h1v1h-1zM535 593h1v1h-1zM535 606h1v1h-1zM535 619h1v1h-1zM535 632h1v1h-1zM535 645h1v1h-1zM535 658h1v1h-1zM535 671h1v1h-1zM535 684h1v1h-1zM535 697h1v1h-1zM535 710h1v1h-1zM535 723h1v1h-1zM535 736h1v1h-1zM535 749h1v1h-1zM535 762h1v1h-1zM535 775h1v1h-1zM535 788h1v1h-1zM535 802h1v1h-1zM548 450h1v1h-1zM548 463h1v1h-1zM548 476h1v1h-1zM548 489h1v1h-1zM548 502h1v1h-1zM548 515h1v1h-1zM548 528h1v1h-1zM548 541h1v1h-1zM548 554h1v1h-1zM548 567h1v1h-1zM548 580h1v1h-1zM548 593h1v1h-1zM548 606h1v1h-1zM548 619h1v1h-1zM548 632h1v1h-1zM548 645h1v1h-1zM548 658h1v1h-1zM548 671h1v1h-1zM548 684h1v1h-1zM548 697h1v1h-1zM548 710h1v1h-1zM548 723h1v1h-1zM548 736h1v1h-1zM548 749h1v1h-1zM548 762h1v1h-1zM548 775h1v1h-1zM548 788h1v1h-1zM548 802h1v1h-1zM561 450h1v1h-1zM561 463h1v1h-1zM561 476h1v1h-1zM561 489h1v1h-1zM561 502h1v1h-1zM561 515h1v1h-1zM561 528h1v1h-1zM561 541h1v1h-1zM561 554h1v1h-1zM561 567h1v1h-1zM561 580h1v1h-1zM561 593h1v1h-1zM561 606h1v1h-1zM561 619h1v1h-1zM561 632h1v1h-1zM561 645h1v1h-1zM561 658h1v1h-1zM561 671h1v1h-1zM561 684h1v1h-1zM561 697h1v1h-1zM561 710h1v1h-1zM561 723h1v1h-1zM561 736h1v1h-1zM561 749h1v1h-1zM561 762h1v1h-1zM561 775h1v1h-1zM561 788h1v1h-1zM561 802h1v1h-1zM574 450h1v1h-1zM574 463h1v1h-1zM574 476h1v1h-1zM574 489h1v1h-1zM574 502h1v1h-1zM574 515h1v1h-1zM574 528h1v1h-1zM574 541h1v1h-1zM574 554h1v1h-1zM574 567h1v1h-1zM574 580h1v1h-1zM574 593h1v1h-1zM574 606h1v1h-1zM574 619h1v1h-1zM574 632h1v1h-1zM574 645h1v1h-1zM574 658h1v1h-1zM574 671h1v1h-1zM574 684h1v1h-1zM574 697h1v1h-1zM574 710h1v1h-1zM574 723h1v1h-1zM574 736h1v1h-1zM574 749h1v1h-1zM574 762h1v1h-1zM574 775h1v1h-1zM574 788h1v1h-1zM574 802h1v1h-1zM587 450h1v1h-1zM587 463h1v1h-1zM587 476h1v1h-1zM587 489h1v1h-1zM587 502h1v1h-1zM587 515h1v1h-1zM587 528h1v1h-1zM587 541h1v1h-1zM587 554h1v1h-1zM587 567h1v1h-1zM587 580h1v1h-1zM587 593h1v1h-1zM587 606h1v1h-1zM587 619h1v1h-1zM587 632h1v1h-1zM587 645h1v1h-1zM587 658h1v1h-1zM587 671h1v1h-1zM587 684h1v1h-1zM587 697h1v1h-1zM587 710h1v1h-1zM587 723h1v1h-1zM587 736h1v1h-1zM587 749h1v1h-1zM587 762h1v1h-1zM587 775h1v1h-1zM587 788h1v1h-1zM587 802h1v1h-1zM600 450h1v1h-1zM600 463h1v1h-1zM600 476h1v1h-1zM600 489h1v1h-1zM600 502h1v1h-1zM600 515h1v1h-1zM600 528h1v1h-1zM600 541h1v1h-1zM600 554h1v1h-1zM600 567h1v1h-1zM600 580h1v1h-1zM600 593h1v1h-1zM600 606h1v1h-1zM600 619h1v1h-1zM600 632h1v1h-1zM600 645h1v1h-1zM600 658h1v1h-1zM600 671h1v1h-1zM600 684h1v1h-1zM600 697h1v1h-1zM600 710h1v1h-1zM600 723h1v1h-1zM600 736h1v1h-1zM600 749h1v1h-1zM600 762h1v1h-1zM600 775h1v1h-1zM600 788h1v1h-1zM600 802h1v1h-1zM613 450h1v1h-1zM613 463h1v1h-1zM613 476h1v1h-1zM613 489h1v1h-1zM613 502h1v1h-1zM613 515h1v1h-1zM613 528h1v1h-1zM613 541h1v1h-1zM613 554h1v1h-1zM613 567h1v1h-1zM613 580h1v1h-1zM613 593h1v1h-1zM613 606h1v1h-1zM613 619h1v1h-1zM613 632h1v1h-1zM613 645h1v1h-1zM613 658h1v1h-1zM613 671h1v1h-1zM613 684h1v1h-1zM613 697h1v1h-1zM613 710h1v1h-1zM613 723h1v1h-1zM613 736h1v1h-1zM613 749h1v1h-1zM613 762h1v1h-1zM613 775h1v1h-1zM613 788h1v1h-1zM613 802h1v1h-1zM626 450h1v1h-1zM626 463h1v1h-1zM626 476h1v1h-1zM626 489h1v1h-1zM626 502h1v1h-1zM626 515h1v1h-1zM626 528h1v1h-1zM626 541h1v1h-1zM626 554h1v1h-1zM626 567h1v1h-1zM626 580h1v1h-1zM626 593h1v1h-1zM626 606h1v1h-1zM626 619h1v1h-1zM626 632h1v1h-1zM626 645h1v1h-1zM626 658h1v1h-1zM626 671h1v1h-1zM626 684h1v1h-1zM626 697h1v1h-1zM626 710h1v1h-1zM626 723h1v1h-1zM626 736h1v1h-1zM626 749h1v1h-1zM626 762h1v1h-1zM626 775h1v1h-1zM626 788h1v1h-1zM626 802h1v1h-1zM639 450h1v1h-1zM639 463h1v1h-1zM639 476h1v1h-1zM639 489h1v1h-1zM639 502h1v1h-1zM639 515h1v1h-1zM639 528h1v1h-1zM639 541h1v1h-1zM639 554h1v1h-1zM639 567h1v1h-1zM639 580h1v1h-1zM639 593h1v1h-1zM639 606h1v1h-1zM639 619h1v1h-1zM639 632h1v1h-1zM639 645h1v1h-1zM639 658h1v1h-1zM639 671h1v1h-1zM639 684h1v1h-1zM639 697h1v1h-1zM639 710h1v1h-1zM639 723h1v1h-1zM639 736h1v1h-1zM639 749h1v1h-1zM639 762h1v1h-1zM639 775h1v1h-1zM639 788h1v1h-1zM639 802h1v1h-1zM652 450h1v1h-1zM652 463h1v1h-1zM652 476h1v1h-1zM652 489h1v1h-1zM652 502h1v1h-1zM652 515h1v1h-1zM652 528h1v1h-1zM652 541h1v1h-1zM652 554h1v1h-1zM652 567h1v1h-1zM652 580h1v1h-1zM652 593h1v1h-1zM652 606h1v1h-1zM652 619h1v1h-1zM652 632h1v1h-1zM652 645h1v1h-1zM652 658h1v1h-1zM652 671h1v1h-1zM652 684h1v1h-1zM652 697h1v1h-1zM652 710h1v1h-1zM652 723h1v1h-1zM652 736h1v1h-1zM652 749h1v1h-1zM652 762h1v1h-1zM652 775h1v1h-1zM652 788h1v1h-1zM652 802h1v1h-1zM665 450h1v1h-1zM665 463h1v1h-1zM665 476h1v1h-1zM665 489h1v1h-1zM665 502h1v1h-1zM665 515h1v1h-1zM665 528h1v1h-1zM665 541h1v1h-1zM665 554h1v1h-1zM665 567h1v1h-1zM665 580h1v1h-1zM665 593h1v1h-1zM665 606h1v1h-1zM665 619h1v1h-1zM665 632h1v1h-1zM665 645h1v1h-1zM665 658h1v1h-1zM665 671h1v1h-1zM665 684h1v1h-1zM665 697h1v1h-1zM665 710h1v1h-1zM665 723h1v1h-1zM665 736h1v1h-1zM665 749h1v1h-1zM665 762h1v1h-1zM665 775h1v1h-1zM665 788h1v1h-1zM665 802h1v1h-1zM678 450h1v1h-1zM678 463h1v1h-1zM678 476h1v1h-1zM678 489h1v1h-1zM678 502h1v1h-1zM678 515h1v1h-1zM678 528h1v1h-1zM678 541h1v1h-1zM678 554h1v1h-1zM678 567h1v1h-1zM678 580h1v1h-1zM678 593h1v1h-1zM678 606h1v1h-1zM678 619h1v1h-1zM678 632h1v1h-1zM678 645h1v1h-1zM678 658h1v1h-1zM678 671h1v1h-1zM678 684h1v1h-1zM678 697h1v1h-1zM678 710h1v1h-1zM678 723h1v1h-1zM678 736h1v1h-1zM678 749h1v1h-1zM678 762h1v1h-1zM678 775h1v1h-1zM678 788h1v1h-1zM678 802h1v1h-1zM691 450h1v1h-1zM691 463h1v1h-1zM691 476h1v1h-1zM691 489h1v1h-1zM691 502h1v1h-1zM691 515h1v1h-1zM691 528h1v1h-1zM691 541h1v1h-1zM691 554h1v1h-1zM691 567h1v1h-1zM691 580h1v1h-1zM691 593h1v1h-1zM691 606h1v1h-1zM691 619h1v1h-1zM691 632h1v1h-1zM691 645h1v1h-1zM691 658h1v1h-1zM691 671h1v1h-1zM691 684h1v1h-1zM691 697h1v1h-1zM691 710h1v1h-1zM691 723h1v1h-1zM691 736h1v1h-1zM691 749h1v1h-1zM691 762h1v1h-1zM691 775h1v1h-1zM691 788h1v1h-1zM691 802h1v1h-1zM704 450h1v1h-1zM704 463h1v1h-1zM704 476h1v1h-1zM704 489h1v1h-1zM704 502h1v1h-1zM704 515h1v1h-1zM704 528h1v1h-1zM704 541h1v1h-1zM704 554h1v1h-1zM704 567h1v1h-1zM704 580h1v1h-1zM704 593h1v1h-1zM704 606h1v1h-1zM704 619h1v1h-1zM704 632h1v1h-1zM704 645h1v1h-1zM704 658h1v1h-1zM704 671h1v1h-1zM704 684h1v1h-1zM704 697h1v1h-1zM704 710h1v1h-1zM704 723h1v1h-1zM704 736h1v1h-1zM704 749h1v1h-1zM704 762h1v1h-1zM704 775h1v1h-1zM704 788h1v1h-1zM704 802h1v1h-1zM717 450h1v1h-1zM717 463h1v1h-1zM717 476h1v1h-1zM717 489h1v1h-1zM717 502h1v1h-1zM717 515h1v1h-1zM717 528h1v1h-1zM717 541h1v1h-1zM717 554h1v1h-1zM717 567h1v1h-1zM717 580h1v1h-1zM717 593h1v1h-1zM717 606h1v1h-1zM717 619h1v1h-1zM717 632h1v1h-1zM717 645h1v1h-1zM717 658h1v1h-1zM717 671h1v1h-1zM717 684h1v1h-1zM717 697h1v1h-1zM717 710h1v1h-1zM717 723h1v1h-1zM717 736h1v1h-1zM717 749h1v1h-1zM717 762h1v1h-1zM717 775h1v1h-1zM717 788h1v1h-1zM717 802h1v1h-1zM730 450h1v1h-1zM730 463h1v1h-1zM730 476h1v1h-1zM730 489h1v1h-1zM730 502h1v1h-1zM730 515h1v1h-1zM730 528h1v1h-1zM730 541h1v1h-1zM730 554h1v1h-1zM730 567h1v1h-1zM730 580h1v1h-1zM730 593h1v1h-1zM730 606h1v1h-1zM730 619h1v1h-1zM730 632h1v1h-1zM730 645h1v1h-1zM730 658h1v1h-1zM730 671h1v1h-1zM730 684h1v1h-1zM730 697h1v1h-1zM730 710h1v1h-1zM730 723h1v1h-1zM730 736h1v1h-1zM730 749h1v1h-1zM730 762h1v1h-1zM730 775h1v1h-1zM730 788h1v1h-1zM730 802h1v1h-1zM743 450h1v1h-1zM743 463h1v1h-1zM743 476h1v1h-1zM743 489h1v1h-1zM743 502h1v1h-1zM743 515h1v1h-1zM743 528h1v1h-1zM743 541h1v1h-1zM743 554h1v1h-1zM743 567h1v1h-1zM743 580h1v1h-1zM743 593h1v1h-1zM743 606h1v1h-1zM743 619h1v1h-1zM743 632h1v1h-1zM743 645h1v1h-1zM743 658h1v1h-1zM743 671h1v1h-1zM743 684h1v1h-1zM743 697h1v1h-1zM743 710h1v1h-1zM743 723h1v1h-1zM743 736h1v1h-1zM743 749h1v1h-1zM743 762h1v1h-1zM743 775h1v1h-1zM743 788h1v1h-1zM743 802h1v1h-1zM756 450h1v1h-1zM756 463h1v1h-1zM756 476h1v1h-1zM756 489h1v1h-1zM756 502h1v1h-1zM756 515h1v1h-1zM756 528h1v1h-1zM756 541h1v1h-1zM756 554h1v1h-1zM756 567h1v1h-1zM756 580h1v1h-1zM756 593h1v1h-1zM756 606h1v1h-1zM756 619h1v1h-1zM756 632h1v1h-1zM756 645h1v1h-1zM756 658h1v1h-1zM756 671h1v1h-1zM756 684h1v1h-1zM756 697h1v1h-1zM756 710h1v1h-1zM756 723h1v1h-1zM756 736h1v1h-1zM756 749h1v1h-1zM756 762h1v1h-1zM756 775h1v1h-1zM756 788h1v1h-1zM756 802h1v1h-1zM769 450h1v1h-1zM769 463h1v1h-1zM769 476h1v1h-1zM769 489h1v1h-1zM769 502h1v1h-1zM769 515h1v1h-1zM769 528h1v1h-1zM769 541h1v1h-1zM769 554h1v1h-1zM769 567h1v1h-1zM769 580h1v1h-1zM769 593h1v1h-1zM769 606h1v1h-1zM769 619h1v1h-1zM769 632h1v1h-1zM769 645h1v1h-1zM769 658h1v1h-1zM769 671h1v1h-1zM769 684h1v1h-1zM769 697h1v1h-1zM769 710h1v1h-1zM769 723h1v1h-1zM769 736h1v1h-1zM769 749h1v1h-1zM769 762h1v1h-1zM769 775h1v1h-1zM769 788h1v1h-1zM769 802h1v1h-1zM783 450h1v1h-1zM783 463h1v1h-1zM783 476h1v1h-1zM783 489h1v1h-1zM783 502h1v1h-1zM783 515h1v1h-1zM783 528h1v1h-1zM783 541h1v1h-1zM783 554h1v1h-1zM783 567h1v1h-1zM783 580h1v1h-1zM783 593h1v1h-1zM783 606h1v1h-1zM783 619h1v1h-1zM783 632h1v1h-1zM783 645h1v1h-1zM783 658h1v1h-1zM783 671h1v1h-1zM783 684h1v1h-1zM783 697h1v1h-1zM783 710h1v1h-1zM783 723h1v1h-1zM783 736h1v1h-1zM783 749h1v1h-1zM783 762h1v1h-1zM783 775h1v1h-1zM783 788h1v1h-1zM783 802h1v1h-1zM796 450h1v1h-1zM796 463h1v1h-1zM796 476h1v1h-1zM796 489h1v1h-1zM796 502h1v1h-1zM796 515h1v1h-1zM796 528h1v1h-1zM796 541h1v1h-1zM796 554h1v1h-1zM796 567h1v1h-1zM796 580h1v1h-1zM796 593h1v1h-1zM796 606h1v1h-1zM796 619h1v1h-1zM796 632h1v1h-1zM796 645h1v1h-1zM796 658h1v1h-1zM796 671h1v1h-1zM796 684h1v1h-1zM796 697h1v1h-1zM796 710h1v1h-1zM796 723h1v1h-1zM796 736h1v1h-1zM796 749h1v1h-1zM796 762h1v1h-1zM796 775h1v1h-1zM796 788h1v1h-1zM796 802h1v1h-1zM809 450h1v1h-1zM809 463h1v1h-1zM809 476h1v1h-1zM809 489h1v1h-1zM809 502h1v1h-1zM809 515h1v1h-1zM809 528h1v1h-1zM809 541h1v1h-1zM809 554h1v1h-1zM809 567h1v1h-1zM809 580h1v1h-1zM809 593h1v1h-1zM809 606h1v1h-1zM809 619h1v1h-1zM809 632h1v1h-1zM809 645h1v1h-1zM809 658h1v1h-1zM809 671h1v1h-1zM809 684h1v1h-1zM809 697h1v1h-1zM809 710h1v1h-1zM809 723h1v1h-1zM809 736h1v1h-1zM809 749h1v1h-1zM809 762h1v1h-1zM809 775h1v1h-1zM809 788h1v1h-1zM809 802h1v1h-1zM822 450h1v1h-1zM822 463h1v1h-1zM822 476h1v1h-1zM822 489h1v1h-1zM822 502h1v1h-1zM822 515h1v1h-1zM822 528h1v1h-1zM822 541h1v1h-1zM822 554h1v1h-1zM822 567h1v1h-1zM822 580h1v1h-1zM822 593h1v1h-1zM822 606h1v1h-1zM822 619h1v1h-1zM822 632h1v1h-1zM822 645h1v1h-1zM822 658h1v1h-1zM822 671h1v1h-1zM822 684h1v1h-1zM822 697h1v1h-1zM822 710h1v1h-1zM822 723h1v1h-1zM822 736h1v1h-1zM822 749h1v1h-1zM822 762h1v1h-1zM822 775h1v1h-1zM822 788h1v1h-1zM822 802h1v1h-1zM835 450h1v1h-1zM835 463h1v1h-1zM835 476h1v1h-1zM835 489h1v1h-1zM835 502h1v1h-1zM835 515h1v1h-1zM835 528h1v1h-1zM835 541h1v1h-1zM835 554h1v1h-1zM835 567h1v1h-1zM835 580h1v1h-1zM835 593h1v1h-1zM835 606h1v1h-1zM835 619h1v1h-1zM835 632h1v1h-1zM835 645h1v1h-1zM835 658h1v1h-1zM835 671h1v1h-1zM835 684h1v1h-1zM835 697h1v1h-1zM835 710h1v1h-1zM835 723h1v1h-1zM835 736h1v1h-1zM835 749h1v1h-1zM835 762h1v1h-1zM835 775h1v1h-1zM835 788h1v1h-1zM835 802h1v1h-1zM848 450h1v1h-1zM848 463h1v1h-1zM848 476h1v1h-1zM848 489h1v1h-1zM848 502h1v1h-1zM848 515h1v1h-1zM848 528h1v1h-1zM848 541h1v1h-1zM848 554h1v1h-1zM848 567h1v1h-1zM848 580h1v1h-1zM848 593h1v1h-1zM848 606h1v1h-1zM848 619h1v1h-1zM848 632h1v1h-1zM848 645h1v1h-1zM848 658h1v1h-1zM848 671h1v1h-1zM848 684h1v1h-1zM848 697h1v1h-1zM848 710h1v1h-1zM848 723h1v1h-1zM848 736h1v1h-1zM848 749h1v1h-1zM848 762h1v1h-1zM848 775h1v1h-1zM848 788h1v1h-1zM848 802h1v1h-1zM861 450h1v1h-1zM861 463h1v1h-1zM861 476h1v1h-1zM861 489h1v1h-1zM861 502h1v1h-1zM861 515h1v1h-1zM861 528h1v1h-1zM861 541h1v1h-1zM861 554h1v1h-1zM861 567h1v1h-1zM861 580h1v1h-1zM861 593h1v1h-1zM861 606h1v1h-1zM861 619h1v1h-1zM861 632h1v1h-1zM861 645h1v1h-1zM861 658h1v1h-1zM861 671h1v1h-1zM861 684h1v1h-1zM861 697h1v1h-1zM861 710h1v1h-1zM861 723h1v1h-1zM861 736h1v1h-1zM861 749h1v1h-1zM861 762h1v1h-1zM861 775h1v1h-1zM861 788h1v1h-1zM861 802h1v1h-1zM874 450h1v1h-1zM874 463h1v1h-1zM874 476h1v1h-1zM874 489h1v1h-1zM874 502h1v1h-1zM874 515h1v1h-1zM874 528h1v1h-1zM874 541h1v1h-1zM874 554h1v1h-1zM874 567h1v1h-1zM874 580h1v1h-1zM874 593h1v1h-1zM874 606h1v1h-1zM874 619h1v1h-1zM874 632h1v1h-1zM874 645h1v1h-1zM874 658h1v1h-1zM874 671h1v1h-1zM874 684h1v1h-1zM874 697h1v1h-1zM874 710h1v1h-1zM874 723h1v1h-1zM874 736h1v1h-1zM874 749h1v1h-1zM874 762h1v1h-1zM874 775h1v1h-1zM874 788h1v1h-1zM874 802h1v1h-1zM887 450h1v1h-1zM887 463h1v1h-1zM887 476h1v1h-1zM887 489h1v1h-1zM887 502h1v1h-1zM887 515h1v1h-1zM887 528h1v1h-1zM887 541h1v1h-1zM887 554h1v1h-1zM887 567h1v1h-1zM887 580h1v1h-1zM887 593h1v1h-1zM887 606h1v1h-1zM887 619h1v1h-1zM887 632h1v1h-1zM887 645h1v1h-1zM887 658h1v1h-1zM887 671h1v1h-1zM887 684h1v1h-1zM887 697h1v1h-1zM887 710h1v1h-1zM887 723h1v1h-1zM887 736h1v1h-1zM887 749h1v1h-1zM887 762h1v1h-1zM887 775h1v1h-1zM887 788h1v1h-1zM887 802h1v1h-1zM900 450h1v1h-1zM900 463h1v1h-1zM900 476h1v1h-1zM900 489h1v1h-1zM900 502h1v1h-1zM900 515h1v1h-1zM900 528h1v1h-1zM900 541h1v1h-1zM900 554h1v1h-1zM900 567h1v1h-1zM900 580h1v1h-1zM900 593h1v1h-1zM900 606h1v1h-1zM900 619h1v1h-1zM900 632h1v1h-1zM900 645h1v1h-1zM900 658h1v1h-1zM900 671h1v1h-1zM900 684h1v1h-1zM900 697h1v1h-1zM900 710h1v1h-1zM900 723h1v1h-1zM900 736h1v1h-1zM900 749h1v1h-1zM900 762h1v1h-1zM900 775h1v1h-1zM900 788h1v1h-1zM900 802h1v1h-1zM913 450h1v1h-1zM913 463h1v1h-1zM913 476h1v1h-1zM913 489h1v1h-1zM913 502h1v1h-1zM913 515h1v1h-1zM913 528h1v1h-1zM913 541h1v1h-1zM913 554h1v1h-1zM913 567h1v1h-1zM913 580h1v1h-1zM913 593h1v1h-1zM913 606h1v1h-1zM913 619h1v1h-1zM913 632h1v1h-1zM913 645h1v1h-1zM913 658h1v1h-1zM913 671h1v1h-1zM913 684h1v1h-1zM913 697h1v1h-1zM913 710h1v1h-1zM913 723h1v1h-1zM913 736h1v1h-1zM913 749h1v1h-1zM913 762h1v1h-1zM913 775h1v1h-1zM913 788h1v1h-1zM913 802h1v1h-1zM926 450h1v1h-1zM926 463h1v1h-1zM926 476h1v1h-1zM926 489h1v1h-1zM926 502h1v1h-1zM926 515h1v1h-1zM926 528h1v1h-1zM926 541h1v1h-1zM926 554h1v1h-1zM926 567h1v1h-1zM926 580h1v1h-1zM926 593h1v1h-1zM926 606h1v1h-1zM926 619h1v1h-1zM926 632h1v1h-1zM926 645h1v1h-1zM926 658h1v1h-1zM926 671h1v1h-1zM926 684h1v1h-1zM926 697h1v1h-1zM926 710h1v1h-1zM926 723h1v1h-1zM926 736h1v1h-1zM926 749h1v1h-1zM926 762h1v1h-1zM926 775h1v1h-1zM926 788h1v1h-1zM926 802h1v1h-1zM939 450h1v1h-1zM939 463h1v1h-1zM939 476h1v1h-1zM939 489h1v1h-1zM939 502h1v1h-1zM939 515h1v1h-1zM939 528h1v1h-1zM939 541h1v1h-1zM939 554h1v1h-1zM939 567h1v1h-1zM939 580h1v1h-1zM939 593h1v1h-1zM939 606h1v1h-1zM939 619h1v1h-1zM939 632h1v1h-1zM939 645h1v1h-1zM939 658h1v1h-1zM939 671h1v1h-1zM939 684h1v1h-1zM939 697h1v1h-1zM939 710h1v1h-1zM939 723h1v1h-1zM939 736h1v1h-1zM939 749h1v1h-1zM939 762h1v1h-1zM939 775h1v1h-1zM939 788h1v1h-1zM939 802h1v1h-1zM952 450h1v1h-1zM952 463h1v1h-1zM952 476h1v1h-1zM952 489h1v1h-1zM952 502h1v1h-1zM952 515h1v1h-1zM952 528h1v1h-1zM952 541h1v1h-1zM952 554h1v1h-1zM952 567h1v1h-1zM952 580h1v1h-1zM952 593h1v1h-1zM952 606h1v1h-1zM952 619h1v1h-1zM952 632h1v1h-1zM952 645h1v1h-1zM952 658h1v1h-1zM952 671h1v1h-1zM952 684h1v1h-1zM952 697h1v1h-1zM952 710h1v1h-1zM952 723h1v1h-1zM952 736h1v1h-1zM952 749h1v1h-1zM952 762h1v1h-1zM952 775h1v1h-1zM952 788h1v1h-1zM952 802h1v1h-1zM965 450h1v1h-1zM965 463h1v1h-1zM965 476h1v1h-1zM965 489h1v1h-1zM965 502h1v1h-1zM965 515h1v1h-1zM965 528h1v1h-1zM965 541h1v1h-1zM965 554h1v1h-1zM965 567h1v1h-1zM965 580h1v1h-1zM965 593h1v1h-1zM965 606h1v1h-1zM965 619h1v1h-1zM965 632h1v1h-1zM965 645h1v1h-1zM965 658h1v1h-1zM965 671h1v1h-1zM965 684h1v1h-1zM965 697h1v1h-1zM965 710h1v1h-1zM965 723h1v1h-1zM965 736h1v1h-1zM965 749h1v1h-1zM965 762h1v1h-1zM965 775h1v1h-1zM965 788h1v1h-1zM965 802h1v1h-1zM978 450h1v1h-1zM978 463h1v1h-1zM978 476h1v1h-1zM978 489h1v1h-1zM978 502h1v1h-1zM978 515h1v1h-1zM978 528h1v1h-1zM978 541h1v1h-1zM978 554h1v1h-1zM978 567h1v1h-1zM978 580h1v1h-1zM978 593h1v1h-1zM978 606h1v1h-1zM978 619h1v1h-1zM978 632h1v1h-1zM978 645h1v1h-1zM978 658h1v1h-1zM978 671h1v1h-1zM978 684h1v1h-1zM978 697h1v1h-1zM978 710h1v1h-1zM978 723h1v1h-1zM978 736h1v1h-1zM978 749h1v1h-1zM978 762h1v1h-1zM978 775h1v1h-1zM978 788h1v1h-1zM978 802h1v1h-1zM991 450h1v1h-1zM991 463h1v1h-1zM991 476h1v1h-1zM991 489h1v1h-1zM991 502h1v1h-1zM991 515h1v1h-1zM991 528h1v1h-1zM991 541h1v1h-1zM991 554h1v1h-1zM991 567h1v1h-1zM991 580h1v1h-1zM991 593h1v1h-1zM991 606h1v1h-1zM991 619h1v1h-1zM991 632h1v1h-1zM991 645h1v1h-1zM991 658h1v1h-1zM991 671h1v1h-1zM991 684h1v1h-1zM991 697h1v1h-1zM991 710h1v1h-1zM991 723h1v1h-1zM991 736h1v1h-1zM991 749h1v1h-1zM991 762h1v1h-1zM991 775h1v1h-1zM991 788h1v1h-1zM991 802h1v1h-1zM1004 450h1v1h-1zM1004 463h1v1h-1zM1004 476h1v1h-1zM1004 489h1v1h-1zM1004 502h1v1h-1zM1004 515h1v1h-1zM1004 528h1v1h-1zM1004 541h1v1h-1zM1004 554h1v1h-1zM1004 567h1v1h-1zM1004 580h1v1h-1zM1004 593h1v1h-1zM1004 606h1v1h-1zM1004 619h1v1h-1zM1004 632h1v1h-1zM1004 645h1v1h-1zM1004 658h1v1h-1zM1004 671h1v1h-1zM1004 684h1v1h-1zM1004 697h1v1h-1zM1004 710h1v1h-1zM1004 723h1v1h-1zM1004 736h1v1h-1zM1004 749h1v1h-1zM1004 762h1v1h-1zM1004 775h1v1h-1zM1004 788h1v1h-1zM1004 802h1v1h-1z" fill="#000000"/>
<rect x="491" y="610" width="1" height="137" fill="#0000ff"/>
<rect x="491" y="610" width="197" height="1" fill="#0000ff"/>
<rect x="491" y="765" width="1" height="46" fill="#0000ff"/>
<circle cx="491.5" cy="755.5" r="8.5" fill="none" stroke="#000080" stroke-width="1"/>
<rect x="489" y="750" width="5" height="1" fill="#000080"/>
<rect x="491" y="748" width="1" height="5" fill="#000080"/>
<rect x="489" y="760" width="5" height="1" fill="#000080"/>
<path d="M487 810h1v1h-1zM488 810h1v1h-1zM489 810h1v1h-1zM490 810h1v1h-1zM491 810h1v1h-1zM492 810h1v1h-1zM493 810h1v1h-1zM494 810h1v1h-1zM495 810h1v1h-1zM496 810h1v1h-1zM496 810h1v1h-1zM495 811h1v1h-1zM494 812h1v1h-1zM493 813h1v1h-1zM492 814h1v1h-1zM491 815h1v1h-1zM491 815h1v1h-1zM490 814h1v1h-1zM489 813h1v1h-1zM489 812h1v1h-1zM488 811h1v1h-1zM487 810h1v1h-1z" fill="#0000ff"/>
<text x="498" y="749" font-size="7" font-weight="normal" fill="#000000" textLength="14.52" lengthAdjust="spacingAndGlyphs" stroke="#000" stroke-width="0.15">Vcc2</text>
<text x="498" y="771" font-size="7" font-weight="normal" fill="#000000" textLength="87.48" lengthAdjust="spacingAndGlyphs" stroke="#000" stroke-width="0.15">PULSE(0 5 0 0 0 0.5m 1m 1000)</text>
<text x="455" y="512" font-size="7" font-weight="normal" fill="#000000" textLength="68.33" lengthAdjust="spacingAndGlyphs" stroke="#000" stroke-width="0.15">.tran 0 100m 50m 1u uic</text>
<rect x="578" y="645" width="11" height="1" fill="#0000ff"/>
<circle cx="598" cy="645" r="8.5" fill="none" stroke="#000080" stroke-width="1"/>
<rect x="592" y="642" width="1" height="6" fill="#000080"/>
<rect x="601" y="645" width="6" height="1" fill="#000080"/>
<rect x="603" y="643" width="1" height="5" fill="#000080"/>
<rect x="607" y="645" width="98" height="1" fill="#0000ff"/>
<path d="M578 640h1v1h-1zM577 641h1v1h-1zM576 642h1v1h-1zM575 643h1v1h-1zM574 644h1v1h-1zM573 645h1v1h-1zM573 645h1v1h-1zM574 646h1v1h-1zM575 647h1v1h-1zM576 648h1v1h-1zM577 649h1v1h-1zM578 650h1v1h-1zM578 650h1v1h-1zM578 649h1v1h-1zM578 648h1v1h-1zM578 647h1v1h-1zM578 646h1v1h-1zM578 645h1v1h-1zM578 644h1v1h-1zM578 643h1v1h-1zM578 642h1v1h-1zM578 641h1v1h-1zM578 640h1v1h-1z" fill="#0000ff"/>
<rect x="656" y="609" width="3" height="3" fill="#0000ff"/>
<rect x="657" y="610" width="1" height="71" fill="#0000ff"/>
<rect x="657" y="680" width="31" height="1" fill="#0000ff"/>
<path d="M757 480h1v1h-1zM758 479h1v1h-1zM759 478h1v1h-1zM759 477h1v1h-1zM760 476h1v1h-1zM761 475h1v1h-1zM761 475h1v1h-1zM762 476h1v1h-1zM763 477h1v1h-1zM764 478h1v1h-1zM765 479h1v1h-1zM766 480h1v1h-1zM766 480h1v1h-1zM765 480h1v1h-1zM764 480h1v1h-1zM763 480h1v1h-1zM762 480h1v1h-1zM761 480h1v1h-1zM760 480h1v1h-1zM759 480h1v1h-1zM758 480h1v1h-1zM757 480h1v1h-1z" fill="#0000ff"/>
<rect x="761" y="480" width="1" height="11" fill="#0000ff"/>
<circle cx="760.5" cy="499.5" r="8" fill="none" stroke="#000080" stroke-width="1"/>
<rect x="759" y="494" width="5" height="1" fill="#000080"/>
<rect x="757" y="505" width="9" height="1" fill="#000080"/>
<rect x="761" y="503" width="1" height="6" fill="#000080"/>
<rect x="761" y="509" width="1" height="42" fill="#0000ff"/>
<rect x="704" y="519" width="58" height="1" fill="#0000ff"/>
<rect x="760" y="518" width="3" height="3" fill="#0000ff"/>
<rect x="704" y="519" width="1" height="15" fill="#0000ff"/>
<path d="M704 533h1v1h-1zM705 534h1v1h-1zM706 534h1v1h-1zM707 535h1v1h-1zM708 535h1v1h-1zM709 536h1v1h-1zM709 536h1v1h-1zM708 537h1v1h-1zM707 537h1v1h-1zM706 538h1v1h-1zM705 538h1v1h-1zM704 539h1v1h-1zM703 539h1v1h-1zM702 540h1v1h-1zM701 540h1v1h-1zM700 541h1v1h-1zM700 541h1v1h-1zM701 541h1v1h-1zM702 542h1v1h-1zM703 542h1v1h-1zM704 543h1v1h-1zM705 543h1v1h-1zM706 544h1v1h-1zM707 544h1v1h-1zM708 545h1v1h-1zM709 545h1v1h-1zM709 545h1v1h-1zM708 546h1v1h-1zM707 546h1v1h-1zM706 547h1v1h-1zM705 547h1v1h-1zM704 548h1v1h-1zM703 548h1v1h-1zM702 549h1v1h-1zM701 549h1v1h-1zM700 550h1v1h-1zM700 550h1v1h-1zM701 551h1v1h-1zM702 551h1v1h-1zM703 552h1v1h-1zM704 552h1v1h-1z" fill="#000080"/>
<rect x="704" y="553" width="1" height="45" fill="#0000ff"/>
<rect x="703" y="562" width="3" height="3" fill="#0000ff"/>
<rect x="704" y="563" width="41" height="1" fill="#0000ff"/>
<rect x="687" y="610" width="4" height="1" fill="#000080"/>
<rect x="691" y="602" width="1" height="18" fill="#000080"/>
<path d="M692 605h1v1h-1zM693 604h1v1h-1zM694 604h1v1h-1zM695 603h1v1h-1zM696 603h1v1h-1zM697 602h1v1h-1zM698 601h1v1h-1zM699 601h1v1h-1zM700 600h1v1h-1zM701 600h1v1h-1zM702 599h1v1h-1zM703 599h1v1h-1zM704 598h1v1h-1zM692 616h1v1h-1zM693 616h1v1h-1zM694 617h1v1h-1zM695 617h1v1h-1zM696 618h1v1h-1zM697 618h1v1h-1zM698 619h1v1h-1zM697 620h1v1h-1zM698 620h1v1h-1zM699 621h1v1h-1zM700 621h1v1h-1zM701 622h1v1h-1zM702 622h1v1h-1zM703 623h1v1h-1zM699 618h1v1h-1zM700 619h1v1h-1zM701 620h1v1h-1zM702 621h1v1h-1z" fill="#000080"/>
<rect x="704" y="623" width="1" height="45" fill="#0000ff"/>
<rect x="703" y="644" width="3" height="3" fill="#0000ff"/>
<rect x="744" y="563" width="4" height="1" fill="#000080"/>
<rect x="748" y="554" width="1" height="18" fill="#000080"/>
<path d="M749 568h1v1h-1zM750 569h1v1h-1zM751 569h1v1h-1zM752 570h1v1h-1zM753 571h1v1h-1zM754 571h1v1h-1zM755 572h1v1h-1zM756 573h1v1h-1zM757 573h1v1h-1zM758 574h1v1h-1zM759 575h1v1h-1zM760 575h1v1h-1zM761 576h1v1h-1zM749 558h1v1h-1zM750 558h1v1h-1zM751 557h1v1h-1zM752 557h1v1h-1zM753 556h1v1h-1zM754 556h1v1h-1zM755 555h1v1h-1zM756 555h1v1h-1zM755 554h1v1h-1zM754 553h1v1h-1zM753 554h1v1h-1zM752 555h1v1h-1zM751 556h1v1h-1zM756 553h1v1h-1zM757 553h1v1h-1zM758 552h1v1h-1zM759 551h1v1h-1zM760 551h1v1h-1z" fill="#000080"/>
<rect x="761" y="576" width="1" height="131" fill="#0000ff"/>
<rect x="760" y="644" width="3" height="3" fill="#0000ff"/>
<rect x="687" y="680" width="4" height="1" fill="#000080"/>
<rect x="691" y="671" width="1" height="19" fill="#000080"/>
<path d="M692 685h1v1h-1zM693 686h1v1h-1zM694 686h1v1h-1zM695 687h1v1h-1zM696 688h1v1h-1zM697 688h1v1h-1zM698 689h1v1h-1zM699 690h1v1h-1zM700 690h1v1h-1zM701 691h1v1h-1zM702 692h1v1h-1zM703 692h1v1h-1zM704 693h1v1h-1zM692 675h1v1h-1zM693 675h1v1h-1zM694 674h1v1h-1zM695 674h1v1h-1zM696 673h1v1h-1zM697 673h1v1h-1zM698 672h1v1h-1zM699 672h1v1h-1zM698 671h1v1h-1zM697 670h1v1h-1zM696 671h1v1h-1zM695 672h1v1h-1zM694 673h1v1h-1zM699 670h1v1h-1zM700 670h1v1h-1zM701 669h1v1h-1zM702 668h1v1h-1zM703 668h1v1h-1z" fill="#000080"/>
<rect x="704" y="693" width="1" height="36" fill="#0000ff"/>
<rect x="703" y="718" width="3" height="3" fill="#0000ff"/>
<rect x="704" y="719" width="41" height="1" fill="#0000ff"/>
<rect x="744" y="719" width="4" height="1" fill="#000080"/>
<rect x="748" y="710" width="1" height="19" fill="#000080"/>
<path d="M749 714h1v1h-1zM750 713h1v1h-1zM751 713h1v1h-1zM752 712h1v1h-1zM753 712h1v1h-1zM754 711h1v1h-1zM755 710h1v1h-1zM756 710h1v1h-1zM757 709h1v1h-1zM758 709h1v1h-1zM759 708h1v1h-1zM760 708h1v1h-1zM761 707h1v1h-1zM749 725h1v1h-1zM750 725h1v1h-1zM751 726h1v1h-1zM752 726h1v1h-1zM753 727h1v1h-1zM754 727h1v1h-1zM755 728h1v1h-1zM754 729h1v1h-1zM755 729h1v1h-1zM756 730h1v1h-1zM757 730h1v1h-1zM758 731h1v1h-1zM759 731h1v1h-1zM760 732h1v1h-1zM756 727h1v1h-1zM757 728h1v1h-1zM758 729h1v1h-1zM759 730h1v1h-1z" fill="#000080"/>
<path d="M704 729h1v1h-1zM705 730h1v1h-1zM706 730h1v1h-1zM707 731h1v1h-1zM708 731h1v1h-1zM709 732h1v1h-1zM709 732h1v1h-1zM708 732h1v1h-1zM707 733h1v1h-1zM706 733h1v1h-1zM705 734h1v1h-1zM704 734h1v1h-1zM703 735h1v1h-1zM702 735h1v1h-1zM701 736h1v1h-1zM700 736h1v1h-1zM700 736h1v1h-1zM701 737h1v1h-1zM702 737h1v1h-1zM703 738h1v1h-1zM704 738h1v1h-1zM705 739h1v1h-1zM706 739h1v1h-1zM707 740h1v1h-1zM708 740h1v1h-1zM709 741h1v1h-1zM709 741h1v1h-1zM708 741h1v1h-1zM707 742h1v1h-1zM706 742h1v1h-1zM705 743h1v1h-1zM704 743h1v1h-1zM703 744h1v1h-1zM702 744h1v1h-1zM701 745h1v1h-1zM700 745h1v1h-1zM700 745h1v1h-1zM701 746h1v1h-1zM702 747h1v1h-1zM703 747h1v1h-1zM704 748h1v1h-1z" fill="#000080"/>
<rect x="704" y="749" width="1" height="6" fill="#0000ff"/>
<rect x="704" y="754" width="58" height="1" fill="#0000ff"/>
<rect x="761" y="732" width="1" height="37" fill="#0000ff"/>
<rect x="760" y="753" width="3" height="3" fill="#0000ff"/>
<circle cx="761.5" cy="777.5" r="8.5" fill="none" stroke="#000080" stroke-width="1"/>
<rect x="759" y="782" width="5" height="1" fill="#000080"/>
<rect x="761" y="780" width="1" height="5" fill="#000080"/>
<rect x="759" y="772" width="5" height="1" fill="#000080"/>
<rect x="761" y="786" width="1" height="25" fill="#0000ff"/>
<path d="M757 810h1v1h-1zM758 810h1v1h-1zM759 810h1v1h-1zM760 810h1v1h-1zM761 810h1v1h-1zM762 810h1v1h-1zM763 810h1v1h-1zM764 810h1v1h-1zM765 810h1v1h-1zM766 810h1v1h-1zM766 810h1v1h-1zM765 811h1v1h-1zM764 812h1v1h-1zM763 813h1v1h-1zM762 814h1v1h-1zM761 815h1v1h-1zM761 815h1v1h-1zM760 814h1v1h-1zM759 813h1v1h-1zM759 812h1v1h-1zM758 811h1v1h-1zM757 810h1v1h-1z" fill="#0000ff"/>
<rect x="761" y="645" width="54" height="1" fill="#0000ff"/>
<path d="M814 645h1v1h-1zM815 644h1v1h-1zM816 643h1v1h-1zM816 642h1v1h-1zM817 641h1v1h-1zM817 641h1v1h-1zM818 642h1v1h-1zM818 643h1v1h-1zM819 644h1v1h-1zM820 645h1v1h-1zM820 646h1v1h-1zM821 647h1v1h-1zM821 648h1v1h-1zM822 649h1v1h-1zM822 649h1v1h-1zM823 648h1v1h-1zM823 647h1v1h-1zM824 646h1v1h-1zM824 645h1v1h-1zM825 644h1v1h-1zM825 643h1v1h-1zM826 642h1v1h-1zM826 641h1v1h-1zM826 641h1v1h-1zM827 642h1v1h-1zM827 643h1v1h-1zM828 644h1v1h-1zM828 645h1v1h-1zM829 646h1v1h-1zM829 647h1v1h-1zM830 648h1v1h-1zM830 649h1v1h-1zM830 649h1v1h-1zM831 648h1v1h-1zM831 647h1v1h-1zM832 646h1v1h-1zM832 645h1v1h-1zM832 645h1v1h-1zM833 645h1v1h-1zM834 645h1v1h-1zM835 645h1v1h-1z" fill="#000080"/>
<rect x="835" y="645" width="31" height="1" fill="#0000ff"/>
<rect x="865" y="645" width="1" height="32" fill="#0000ff"/>
<path d="M861 676h1v1h-1zM862 676h1v1h-1zM863 676h1v1h-1zM864 676h1v1h-1zM865 676h1v1h-1zM866 676h1v1h-1zM867 676h1v1h-1zM868 676h1v1h-1zM869 676h1v1h-1zM870 676h1v1h-1zM870 676h1v1h-1zM869 677h1v1h-1zM868 678h1v1h-1zM867 679h1v1h-1zM866 680h1v1h-1zM865 681h1v1h-1zM865 681h1v1h-1zM864 680h1v1h-1zM863 679h1v1h-1zM863 678h1v1h-1zM862 677h1v1h-1zM861 676h1v1h-1z" fill="#0000ff"/>
<text x="743" y="492" font-size="7" font-weight="normal" fill="#000000" textLength="12.47" lengthAdjust="spacingAndGlyphs" stroke="#000" stroke-width="0.15">12V</text>
<text x="741" y="514" font-size="7" font-weight="normal" fill="#000000" textLength="14.52" lengthAdjust="spacingAndGlyphs" stroke="#000" stroke-width="0.15">Vcc1</text>
<text x="709" y="543" font-size="7" font-weight="normal" fill="#000000" textLength="10.07" lengthAdjust="spacingAndGlyphs" stroke="#000" stroke-width="0.15">R1</text>
<text x="709" y="552" font-size="7" font-weight="normal" fill="#000000" textLength="11.3" lengthAdjust="spacingAndGlyphs" stroke="#000" stroke-width="0.15">10k</text>
<text x="766" y="561" font-size="7" font-weight="normal" fill="#000000" textLength="26.6" lengthAdjust="spacingAndGlyphs" stroke="#000" stroke-width="0.15">BC807-25</text>
<text x="766" y="570" font-size="7" font-weight="normal" fill="#000000" textLength="10.38" lengthAdjust="spacingAndGlyphs" stroke="#000" stroke-width="0.15">Q4</text>
<text x="702" y="610" font-size="7" font-weight="normal" fill="#000000" textLength="9.34" lengthAdjust="spacingAndGlyphs" stroke="#000" stroke-width="0.15">Q1</text>
<text x="702" y="620" font-size="7" font-weight="normal" fill="#000000" textLength="25.62" lengthAdjust="spacingAndGlyphs" stroke="#000" stroke-width="0.15">BC817-25</text>
<text x="710" y="678" font-size="7" font-weight="normal" fill="#000000" textLength="25.62" lengthAdjust="spacingAndGlyphs" stroke="#000" stroke-width="0.15">BC807-25</text>
<text x="710" y="688" font-size="7" font-weight="normal" fill="#000000" textLength="9.34" lengthAdjust="spacingAndGlyphs" stroke="#000" stroke-width="0.15">Q2</text>
<text x="759" y="718" font-size="7" font-weight="normal" fill="#000000" textLength="9.34" lengthAdjust="spacingAndGlyphs" stroke="#000" stroke-width="0.15">Q3</text>
<text x="759" y="727" font-size="7" font-weight="normal" fill="#000000" textLength="25.62" lengthAdjust="spacingAndGlyphs" stroke="#000" stroke-width="0.15">BC817-25</text>
<text x="710" y="738" font-size="7" font-weight="normal" fill="#000000" textLength="7.96" lengthAdjust="spacingAndGlyphs" stroke="#000" stroke-width="0.15">R7</text>
<text x="709" y="748" font-size="7" font-weight="normal" fill="#000000" textLength="12.47" lengthAdjust="spacingAndGlyphs" stroke="#000" stroke-width="0.15">10K</text>
<text x="744" y="771" font-size="7" font-weight="normal" fill="#000000" textLength="11.34" lengthAdjust="spacingAndGlyphs" stroke="#000" stroke-width="0.15">12V</text>
<text x="741" y="792" font-size="7" font-weight="normal" fill="#000000" textLength="13.62" lengthAdjust="spacingAndGlyphs" stroke="#000" stroke-width="0.15">Vcc3</text>
<text x="820" y="641" font-size="7" font-weight="normal" fill="#000000" textLength="8.95" lengthAdjust="spacingAndGlyphs" stroke="#000" stroke-width="0.15">R5</text>
<text x="821" y="656" font-size="7" font-weight="normal" fill="#000000" textLength="8.64" lengthAdjust="spacingAndGlyphs" stroke="#000" stroke-width="0.15">1k</text>
<text transform="translate(588.5 666.5) rotate(-90)" font-size="6.8" fill="#000000" stroke="#000" stroke-width="0.15" textLength="14.2" lengthAdjust="spacingAndGlyphs">2.5V</text>
<text transform="translate(610.5 668.5) rotate(-90)" font-size="6.8" fill="#000000" stroke="#000" stroke-width="0.15" textLength="15.4" lengthAdjust="spacingAndGlyphs">Vcc4</text>
</svg>
</body></html>
